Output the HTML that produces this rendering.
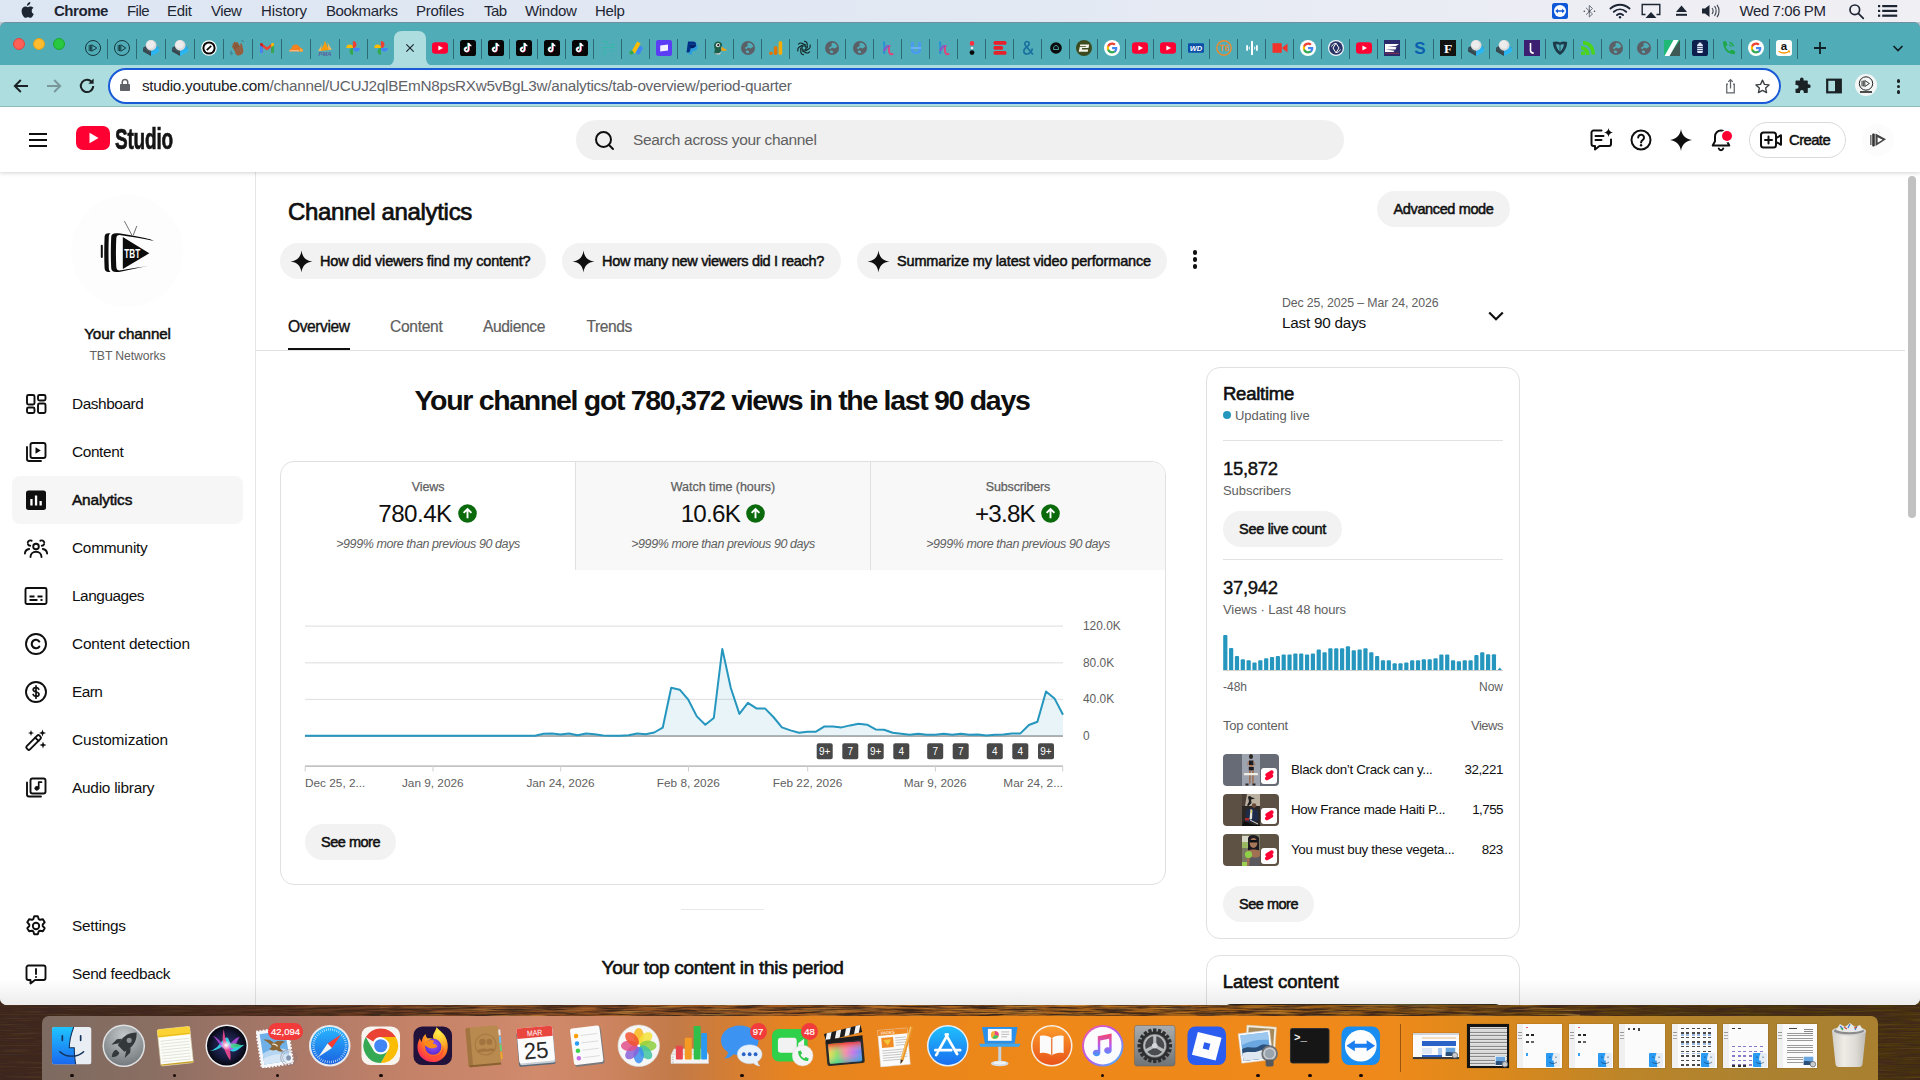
<!DOCTYPE html>
<html lang="en">
<head>
<meta charset="utf-8">
<title>Channel analytics - YouTube Studio</title>
<style>
*{box-sizing:border-box;margin:0;padding:0}
html,body{width:1920px;height:1080px;overflow:hidden;background:#3a2418;font-family:"Liberation Sans",sans-serif;color:#0f0f0f}
.abs{position:absolute}
#screen{position:absolute;left:0;top:0;width:1920px;height:1080px;overflow:hidden}
/* desktop wallpaper */
#wall{position:absolute;left:0;top:1000px;width:1920px;height:80px}
/* mac menubar */
#menubar{position:absolute;left:0;top:0;width:1920px;height:22px;background:linear-gradient(90deg,#dde6f3 0%,#e3e9f3 55%,#eeeef4 85%,#f0eff3 100%);font-size:15px;line-height:22px;color:#1d2533;white-space:nowrap}
#menubar span{position:absolute;top:0}
/* chrome */
#tabbar{position:absolute;left:0;top:22px;width:1920px;height:43px;background:#50adb8;border-top:1px solid #6f8fa0;border-top-left-radius:6px;border-top-right-radius:6px}
#toolbar{position:absolute;left:0;top:65px;width:1920px;height:42px;background:#aedddf;border-bottom:1px solid #8fb9bd}
#url{position:absolute;left:108px;top:3px;width:1673px;height:35.5px;border:2px solid #1a5ad7;border-radius:18px;background:#fff}
#url .t{position:absolute;left:32px;top:0;line-height:31px;font-size:15.3px;color:#5f6368;white-space:nowrap;letter-spacing:-0.05px}
#url .t b{font-weight:400;color:#202124}
/* page */
#page{position:absolute;left:0;top:107px;width:1920px;height:898px;background:#fff;overflow:hidden;border-bottom-left-radius:7px;border-bottom-right-radius:7px}
#ythead{position:absolute;left:0;top:0;width:1920px;height:65px;background:#fff;box-shadow:0 1px 4px rgba(0,0,0,.18);z-index:5}
#side{position:absolute;left:0;top:65px;width:256px;height:833px;border-right:1px solid #e5e5e5;background:#fff}
#main{position:absolute;left:256px;top:65px;width:1649px;height:833px;background:#fff;overflow:hidden}
#sbar{position:absolute;left:1905px;top:65px;width:15px;height:833px;background:#fff}
#sbar i{position:absolute;left:3px;top:4px;width:8px;height:342px;border-radius:4px;background:#c1c1c1}
.nav{position:absolute;left:12px;width:231px;height:46px;border-radius:8px}
.nav.sel{background:#f6f6f6}
.nav svg{position:absolute;left:12px;top:12px;width:24px;height:24px}
.nav span{position:absolute;left:60px;top:0;line-height:46px;font-size:15.4px;color:#0f0f0f;white-space:nowrap}
.nav.sel span{-webkit-text-stroke:.5px #0f0f0f}
.pill{position:absolute;background:#f2f2f2;border-radius:18px;height:36px;line-height:36px;font-size:14.5px;font-weight:400;-webkit-text-stroke:.5px #0f0f0f;color:#0f0f0f;text-align:center;white-space:nowrap}
.chip{position:absolute;top:71px;height:36px;border-radius:18px;background:#f2f2f2;font-size:14.5px;font-weight:400;-webkit-text-stroke:.5px #0f0f0f;line-height:36px;color:#0f0f0f;white-space:nowrap;padding-left:40px}
.chip svg{position:absolute;left:10px;top:6.5px;width:23px;height:23px}
.tab{position:absolute;top:134px;font-size:15.6px;line-height:48px;color:#606060;white-space:nowrap}
.card{position:absolute;border:1px solid #e0e0e0;border-radius:14px;background:#fff}
.gry{color:#606060}
/* dock */
#dock{position:absolute;left:42px;top:1016px;width:1836px;height:70px;border-radius:7px 7px 0 0;background:linear-gradient(90deg,#7d6a60 0%,#8a6e62 6%,#a87868 13%,#c48268 20%,#d08a6c 27%,#cc8460 31%,#c27a48 34.500%,#d47e34 37.500%,#e8841f 41%,#ee8818 55%,#ef8a1a 73%,#dc891c 79%,#bd8528 86%,#ac8230 93%,#a88030 100%)}
/*FIT_START*/
#t_ca{letter-spacing:-0.321px !important}
#t_am{letter-spacing:-0.369px !important}
#t_c1{letter-spacing:-0.172px !important}
#t_c2{letter-spacing:-0.306px !important}
#t_c3{letter-spacing:-0.149px !important}
#t_tb1{letter-spacing:-0.438px !important}
#t_tb2{letter-spacing:-0.304px !important}
#t_tb3{letter-spacing:-0.379px !important}
#t_tb4{letter-spacing:-0.411px !important}
#t_d1{letter-spacing:-0.104px !important}
#t_d2{letter-spacing:-0.229px !important}
#t_hl{letter-spacing:-1.312px !important}
#t_s1a{letter-spacing:-0.105px !important}
#t_s2a{letter-spacing:-0.046px !important}
#t_s3a{letter-spacing:-0.155px !important}
#t_s1b{letter-spacing:-0.546px !important}
#t_s2b{letter-spacing:-0.784px !important}
#t_s3b{letter-spacing:-0.778px !important}
#t_s1c{letter-spacing:-0.419px !important}
#t_s2c{letter-spacing:-0.419px !important}
#t_s3c{letter-spacing:-0.419px !important}
#t_sm1{letter-spacing:-0.484px !important}
#t_sm2{letter-spacing:-0.484px !important}
#t_tc{letter-spacing:-0.281px !important}
#t_rt{letter-spacing:-0.250px !important}
#t_ul{letter-spacing:-0.043px !important}
#t_n1{letter-spacing:-0.299px !important}
#t_n2{letter-spacing:-0.299px !important}
#t_sb{letter-spacing:-0.058px !important}
#t_slc{letter-spacing:-0.307px !important}
#t_v48{letter-spacing:-0.085px !important}
#t_tc2{letter-spacing:-0.211px !important}
#t_r0{letter-spacing:-0.331px !important}
#t_r1{letter-spacing:-0.296px !important}
#t_r2{letter-spacing:-0.311px !important}
#t_lc{letter-spacing:-0.024px !important}
#t_yc{letter-spacing:-0.134px !important}
#t_tbt{letter-spacing:-0.082px !important}
#t_srch{letter-spacing:-0.332px !important}
#t_cr{letter-spacing:-0.550px !important}
#t_nv1{letter-spacing:-0.444px !important}
#t_nv2{letter-spacing:-0.372px !important}
#t_nv3{letter-spacing:-0.155px !important}
#t_nv4{letter-spacing:-0.259px !important}
#t_nv5{letter-spacing:-0.464px !important}
#t_nv6{letter-spacing:-0.162px !important}
#t_nv7{letter-spacing:-0.550px !important}
#t_nv8{letter-spacing:-0.117px !important}
#t_nv9{letter-spacing:-0.250px !important}
#t_nv10{letter-spacing:-0.228px !important}
#t_nv11{letter-spacing:-0.345px !important}
#t_url{letter-spacing:-0.288px !important}
#t_clk{letter-spacing:-0.419px !important}
#t_v0{letter-spacing:-0.411px !important}
#t_v1{letter-spacing:-0.543px !important}
#t_v2{letter-spacing:-0.348px !important}
#t_vw{letter-spacing:-0.491px !important}
#t_mb1{letter-spacing:-0.465px !important}
#t_mb2{letter-spacing:-0.550px !important}
#t_mb3{letter-spacing:-0.340px !important}
#t_mb4{letter-spacing:-0.438px !important}
#t_mb5{letter-spacing:-0.096px !important}
#t_mb6{letter-spacing:-0.392px !important}
#t_mb7{letter-spacing:-0.254px !important}
#t_mb8{letter-spacing:-0.550px !important}
#t_mb9{letter-spacing:-0.310px !important}
#t_mb10{letter-spacing:-0.340px !important}
/*FIT_END*/
</style>
</head>
<body>
<div id="screen">
<svg id="wall" width="1920" height="80" viewBox="0 0 1920 80" preserveAspectRatio="none">
<defs>
<linearGradient id="wg" x1="0" y1="0" x2="1" y2="0"><stop offset="0" stop-color="#3a2620"/><stop offset=".08" stop-color="#422820"/><stop offset=".18" stop-color="#663822"/><stop offset=".28" stop-color="#884a22"/><stop offset=".4" stop-color="#a05a20"/><stop offset=".55" stop-color="#a8621a"/><stop offset=".68" stop-color="#9a5c14"/><stop offset=".78" stop-color="#6e460f"/><stop offset=".88" stop-color="#4c360c"/><stop offset="1" stop-color="#48340c"/></linearGradient>
<filter id="wn" x="0" y="0" width="100%" height="100%"><feTurbulence type="fractalNoise" baseFrequency="0.03 0.55" numOctaves="4" seed="7"/><feColorMatrix type="matrix" values="0 0 0 0 0.05  0 0 0 0 0.02  0 0 0 0 0.01  3 0 0 0 -1.050"/></filter>
<filter id="wn2" x="0" y="0" width="100%" height="100%"><feTurbulence type="fractalNoise" baseFrequency="0.02 0.7" numOctaves="3" seed="21"/><feColorMatrix type="matrix" values="0 0 0 0 0.95  0 0 0 0 0.55  0 0 0 0 0.1  0 2.500 0 0 -1.250"/></filter>
</defs>
<rect width="1920" height="80" fill="url(#wg)"/>
<rect width="1920" height="80" filter="url(#wn)"/>
<rect x="380" width="1200" height="80" filter="url(#wn2)" opacity=".4"/><rect width="1920" height="80" filter="url(#wn2)" opacity=".12"/>
</svg>

<!-- MENUBAR -->
<div id="menubar">
<svg class="abs" style="left:20px;top:2px" width="15" height="18" viewBox="0 0 15 18"><path fill="#1d2533" d="M10.3 0c.1 1-.3 1.900-.9 2.600-.6.700-1.500 1.200-2.400 1.100-.1-.9.300-1.900.9-2.500C8.500.500 9.500.100 10.300 0zM13.300 6.100c-.1.100-1.600.900-1.600 2.800 0 2.200 1.900 2.900 2 3-.0.100-.3 1.100-1 2.100-.6.900-1.300 1.800-2.300 1.800s-1.300-.6-2.400-.6c-1.200 0-1.500.6-2.500.6s-1.600-.8-2.300-1.800C2.300 12.800 1.600 10.800 1.600 9c0-3 1.900-4.500 3.800-4.500 1 0 1.800.700 2.500.700.600 0 1.600-.7 2.700-.7.400 0 2 .0 3 1.500z"/></svg>
<span id="t_mb1" style="left:54px;font-weight:700">Chrome</span>
<span id="t_mb2" style="left:127px">File</span>
<span id="t_mb3" style="left:167px">Edit</span>
<span id="t_mb4" style="left:211px">View</span>
<span id="t_mb5" style="left:261px">History</span>
<span id="t_mb6" style="left:326px">Bookmarks</span>
<span id="t_mb7" style="left:416px">Profiles</span>
<span id="t_mb8" style="left:484px">Tab</span>
<span id="t_mb9" style="left:525px">Window</span>
<span id="t_mb10" style="left:595px">Help</span>
<span style="left:1739.500px" id="t_clk">Wed 7:06 PM</span>

<svg class="abs" style="left:1552px;top:3px" width="16" height="16" viewBox="0 0 16 16"><rect width="16" height="16" rx="2.500" fill="#0e57d8"/><circle cx="8" cy="8" r="6" fill="#fff"/><path d="M3.200 8l2.800-2.300v1.500h4V5.700L12.800 8 10 10.300V8.800H6v1.500z" fill="#0e57d8"/></svg>
<svg class="abs" style="left:1582px;top:3px" width="15" height="17" viewBox="0 0 15 17" fill="none" stroke="#6a6f7a" stroke-width="1"><path d="M4 4.800l6.500 6.200-3.200 3V2.500l3.200 3L4 11.700"/><circle cx="2.300" cy="8.300" r=".8" fill="#444" stroke="none"/><circle cx="12.500" cy="8.300" r=".8" fill="#444" stroke="none"/><circle cx="7.300" cy="8.300" r=".9" fill="#444" stroke="none"/></svg>
<svg class="abs" style="left:1609px;top:3px" width="22" height="16" viewBox="0 0 22 16" fill="none" stroke="#1d2533" stroke-width="1.900" stroke-linecap="round"><path d="M1.500 5.500c5.500-5 13.500-5 19 0"/><path d="M4.800 8.800c3.700-3.300 8.700-3.300 12.400 0"/><path d="M8 12c1.800-1.600 4.200-1.600 6 0"/><circle cx="11" cy="14.300" r="1.200" fill="#1d2533" stroke="none"/></svg>
<svg class="abs" style="left:1641px;top:3px" width="20" height="16" viewBox="0 0 20 16"><path d="M4.500 11.500H1.200V1.500h17.600v10H15.500" fill="none" stroke="#1d2533" stroke-width="1.400"/><path d="M10 9l5.500 6h-11z" fill="#1d2533"/></svg>
<svg class="abs" style="left:1675px;top:5px" width="13" height="12" viewBox="0 0 13 12"><path d="M6.500 0.500L12 7H1z" fill="#1d2533"/><rect x="1" y="8.800" width="11" height="2" fill="#1d2533"/></svg>
<svg class="abs" style="left:1701px;top:3px" width="19" height="16" viewBox="0 0 19 16"><path d="M1 5.500h3L8.500 2v12L4 10.500H1z" fill="#1d2533"/><path d="M11 5c1.300 1.700 1.300 4.300 0 6M13.500 3.200c2.200 2.700 2.200 6.900 0 9.600M16 1.800c2.700 3.500 2.700 8.900 0 12.400" fill="none" stroke="#1d2533" stroke-width="1.100" opacity=".85"/></svg>
<svg class="abs" style="left:1848px;top:3px" width="17" height="17" viewBox="0 0 17 17" fill="none" stroke="#1d2533" stroke-width="1.700"><circle cx="6.800" cy="6.800" r="4.800"/><path d="M10.300 10.300l5 5" stroke-linecap="round"/></svg>
<svg class="abs" style="left:1878px;top:5px" width="20" height="12" viewBox="0 0 20 12" fill="#1d2533"><rect x="0" y="0" width="2.200" height="2.200"/><rect x="4.200" y="0" width="15" height="2.200"/><rect x="0" y="4.800" width="2.200" height="2.200"/><rect x="4.200" y="4.800" width="15" height="2.200"/><rect x="0" y="9.600" width="2.200" height="2.200"/><rect x="4.200" y="9.600" width="15" height="2.200"/></svg>

</div>

<i class="abs" style="left:0;top:22px;width:1920px;height:10px;background:#b9c6d2"></i>
<!-- CHROME TAB BAR -->
<div id="tabbar">
<i class="abs" style="left:13px;top:15px;width:12px;height:12px;border-radius:6px;background:#fe5f57;border:.5px solid #e0443e"></i>
<i class="abs" style="left:33px;top:15px;width:12px;height:12px;border-radius:6px;background:#febc2e;border:.5px solid #dea123"></i>
<i class="abs" style="left:53px;top:15px;width:12px;height:12px;border-radius:6px;background:#28c840;border:.5px solid #1aab29"></i>
<!--TABS_START-->
<svg class="abs" style="left:85.10px;top:17.00px" width="16" height="16" viewBox="0 0 16 16"><circle cx="8" cy="8" r="7.500" fill="none" stroke="#15353c" stroke-width="1"/><path d="M6.800 4.800l5 3.200-5 3.200z" fill="none" stroke="#15353c" stroke-width="1"/><path d="M4.200 5v6M5.500 4.700v6.600" stroke="#15353c" stroke-width=".9"/></svg>
<svg class="abs" style="left:114.10px;top:17.00px" width="16" height="16" viewBox="0 0 16 16"><circle cx="8" cy="8" r="7.500" fill="none" stroke="#15353c" stroke-width="1"/><path d="M6.800 4.800l5 3.200-5 3.200z" fill="none" stroke="#15353c" stroke-width="1"/><path d="M4.200 5v6M5.500 4.700v6.600" stroke="#15353c" stroke-width=".9"/></svg>
<svg class="abs" style="left:143.10px;top:17.00px" width="16" height="16" viewBox="0 0 16 16"><path d="M0 7.800L8.100 3.100 16.100 7.800 8.100 12.500z" fill="#37474f"/><path d="M8.100 3.100L16.100 7.800 8.100 12.500z" fill="#29b6f6"/><path d="M0 7.800l8.100 4.700v3.600L0 11.500z" fill="#37474f"/><path d="M8.100 12.500l8-4.700v3.700l-8 4.600z" fill="#29b6f6"/><circle cx="8.100" cy="5.300" r="5.400" fill="#d9d9d9"/><circle cx="7.600" cy="4.600" r="4.200" fill="#ececec"/></svg>
<svg class="abs" style="left:172.10px;top:17.00px" width="16" height="16" viewBox="0 0 16 16"><path d="M0 7.800L8.100 3.100 16.100 7.800 8.100 12.500z" fill="#37474f"/><path d="M8.100 3.100L16.100 7.800 8.100 12.500z" fill="#29b6f6"/><path d="M0 7.800l8.100 4.700v3.600L0 11.500z" fill="#37474f"/><path d="M8.100 12.500l8-4.700v3.700l-8 4.600z" fill="#29b6f6"/><circle cx="8.100" cy="5.300" r="5.400" fill="#d9d9d9"/><circle cx="7.600" cy="4.600" r="4.200" fill="#ececec"/></svg>
<svg class="abs" style="left:201.10px;top:17.00px" width="16" height="16" viewBox="0 0 16 16"><circle cx="8" cy="8" r="7.800" fill="#fff"/><circle cx="8" cy="8" r="6.600" fill="#0a0a0a"/><circle cx="8" cy="8" r="4.600" fill="#fff"/><path d="M5.800 10.200l4.400-4.400" stroke="#0a0a0a" stroke-width="1.700"/></svg>
<svg class="abs" style="left:230.10px;top:17.00px" width="16" height="16" viewBox="0 0 16 16"><g transform="rotate(-32 8 9) translate(-1.200 -.8) scale(1.150)"><path d="M4.600 8.500V4.200c0-1 1.500-1 1.500 0V2.800c0-1.100 1.600-1.100 1.600 0V2.500c0-1.100 1.600-1.100 1.600 0v.9c0-1 1.500-1 1.500 0v4.300l1-1.600c.5-.9 1.800-.3 1.400.7l-1.600 4.500c-.6 1.800-1.900 3-3.900 3-2.300 0-3.700-1.400-3.700-3.500z" fill="#94603f"/><path d="M6.100 4.200v3.300M7.700 3v4.300M9.300 3.400v4" stroke="#6e452c" stroke-width=".45"/></g><path d="M.800 10.800c.3 1.300 1 2.300 2 3M0 12.200c.4 1.300 1.100 2.300 2.100 3" stroke="#3e6a73" stroke-width=".8" fill="none"/><path d="M11.500 .600c1 .1 1.900.6 2.500 1.400" stroke="#3e6a73" stroke-width=".8" fill="none"/></svg>
<svg class="abs" style="left:259.10px;top:17.00px" width="16" height="16" viewBox="0 0 16 16"><path d="M1 4v9h2.800V7.300L8 10.400l4.200-3.100V13H15V4l-1.600-.8L8 7.200 2.600 3.200z" fill="#ea4335"/><path d="M1 4.500V13h2.800V6.500z" fill="#4285f4"/><path d="M15 4.500V13h-2.800V6.500z" fill="#34a853"/><path d="M12.200 3.800V7.300L15 5.200V4.300c0-1.200-1.400-1.800-2.300-1.100z" fill="#fbbc04"/><path d="M3.800 3.800V7.300L1 5.200V4.300c0-1.200 1.400-1.800 2.300-1.100z" fill="#c5221f"/></svg>
<svg class="abs" style="left:288.10px;top:17.00px" width="16" height="16" viewBox="0 0 16 16"><path d="M11.200 11.500H1.300c-.2-2 .9-3 2.300-3 .2-2.400 2-3.900 4.200-3.900 2 0 3.300 1.100 3.900 2.900 1.700-.1 2.900.9 3.200 2.300.1.600.1 1.200-.1 1.700z" fill="#f6821f"/><path d="M12.200 8.500c1.500 0 2.600 1.200 2.600 3h-3.300z" fill="#fbad41"/><path d="M1.500 10.800h9.500" stroke="#fff" stroke-width=".6"/></svg>
<svg class="abs" style="left:317.10px;top:17.00px" width="16" height="16" viewBox="0 0 16 16"><path d="M8 .500c1 3 2.500 6.500 4.500 9.500L3 11C5.500 8 7.300 4 8 .5z" fill="#f89c0e"/><path d="M10.500 2c1 2.500 2.700 5.200 4.500 7.500l-3.500.4z" fill="#f5b95a"/><path d="M5 3c-.5 2.500-2 5.500-4 8l3-.3z" fill="#f5b95a"/><text x="8" y="15.600" font-size="5.800" font-weight="700" font-style="italic" fill="#5a5f9c" text-anchor="middle" font-family="Liberation Sans, sans-serif">PMA</text></svg>
<svg class="abs" style="left:345.30px;top:17.00px" width="16" height="16" viewBox="0 0 16 16"><path d="M8 8V1.200a3.400 3.400 0 010 6.800z" fill="#ea4335" transform="translate(-.2 0)"/><path d="M7.800 8V1.200A3.500 3.500 0 004.300 4.700h0A3.400 3.400 0 007.800 8z" fill="#ea4335" opacity="0"/><path d="M8 8H1.200a3.400 3.400 0 016.800 0z" fill="#fbbc04"/><path d="M8 8v6.800a3.400 3.400 0 010-6.800z" fill="#34a853"/><path d="M8 8h6.800a3.400 3.400 0 01-6.800 0z" fill="#4285f4"/><path d="M8 8V1.200a3.400 3.400 0 010 6.800z" fill="#ea4335"/></svg>
<svg class="abs" style="left:373.30px;top:17.00px" width="16" height="16" viewBox="0 0 16 16"><path d="M8 8V1.200a3.400 3.400 0 010 6.800z" fill="#ea4335" transform="translate(-.2 0)"/><path d="M7.800 8V1.200A3.500 3.500 0 004.300 4.700h0A3.400 3.400 0 007.800 8z" fill="#ea4335" opacity="0"/><path d="M8 8H1.200a3.400 3.400 0 016.800 0z" fill="#fbbc04"/><path d="M8 8v6.800a3.400 3.400 0 010-6.800z" fill="#34a853"/><path d="M8 8h6.800a3.400 3.400 0 01-6.800 0z" fill="#4285f4"/><path d="M8 8V1.200a3.400 3.400 0 010 6.800z" fill="#ea4335"/></svg>
<i class="abs" style="left:107.10px;top:15.5px;width:1.200px;height:20px;background:#2c6a74"></i>
<i class="abs" style="left:136.10px;top:15.5px;width:1.200px;height:20px;background:#2c6a74"></i>
<i class="abs" style="left:165.10px;top:15.5px;width:1.200px;height:20px;background:#2c6a74"></i>
<i class="abs" style="left:194.10px;top:15.5px;width:1.200px;height:20px;background:#2c6a74"></i>
<i class="abs" style="left:223.10px;top:15.5px;width:1.200px;height:20px;background:#2c6a74"></i>
<i class="abs" style="left:252.10px;top:15.5px;width:1.200px;height:20px;background:#2c6a74"></i>
<i class="abs" style="left:281.10px;top:15.5px;width:1.200px;height:20px;background:#2c6a74"></i>
<i class="abs" style="left:310.10px;top:15.5px;width:1.200px;height:20px;background:#2c6a74"></i>
<i class="abs" style="left:338.70px;top:15.5px;width:1.200px;height:20px;background:#2c6a74"></i>
<i class="abs" style="left:366.70px;top:15.5px;width:1.200px;height:20px;background:#2c6a74"></i>
<svg class="abs" style="left:386px;top:7px" width="48" height="36" viewBox="0 0 48 36"><path d="M0 36c4.500 0 8-3 8-8V9c0-5 3-8 8-8h16c5 0 8 3 8 8v19c0 5 3.500 8 8 8z" fill="#aedddf"/></svg>
<svg class="abs" style="left:403.00px;top:18.00px" width="14" height="14" viewBox="0 0 16 16"><path d="M3.800 3.800l8.400 8.400M12.200 3.800l-8.400 8.400" stroke="#1f2a30" stroke-width="1.400"/></svg>
<svg class="abs" style="left:431.75px;top:17.00px" width="16" height="16" viewBox="0 0 16 16"><rect x="0" y="2.300" width="16" height="11.400" rx="3.200" fill="#ff0033"/><path d="M6.400 5.400v5.200L11 8z" fill="#fff"/></svg>
<i class="abs" style="left:453.25px;top:15.5px;width:1.200px;height:20px;background:#2c6a74"></i>
<svg class="abs" style="left:459.75px;top:17.00px" width="16" height="16" viewBox="0 0 16 16"><rect x="0" y="0" width="16" height="16" rx="2.600" fill="#060606"/><path d="M8.600 3v6.600a1.900 1.900 0 11-1.600-1.900" fill="none" stroke="#25f4ee" stroke-width="1.600" transform="translate(-.4 -.3)"/><path d="M8.600 3v6.600a1.900 1.900 0 11-1.600-1.900" fill="none" stroke="#fe2c55" stroke-width="1.600" transform="translate(.4 .3)"/><path d="M8.600 3v6.600a1.900 1.900 0 11-1.600-1.900M8.600 3.200c.3 1.500 1.300 2.400 2.800 2.500" fill="none" stroke="#fff" stroke-width="1.600"/></svg>
<i class="abs" style="left:481.25px;top:15.5px;width:1.200px;height:20px;background:#2c6a74"></i>
<svg class="abs" style="left:487.75px;top:17.00px" width="16" height="16" viewBox="0 0 16 16"><rect x="0" y="0" width="16" height="16" rx="2.600" fill="#060606"/><path d="M8.600 3v6.600a1.900 1.900 0 11-1.600-1.900" fill="none" stroke="#25f4ee" stroke-width="1.600" transform="translate(-.4 -.3)"/><path d="M8.600 3v6.600a1.900 1.900 0 11-1.600-1.900" fill="none" stroke="#fe2c55" stroke-width="1.600" transform="translate(.4 .3)"/><path d="M8.600 3v6.600a1.900 1.900 0 11-1.600-1.900M8.600 3.200c.3 1.500 1.300 2.400 2.800 2.500" fill="none" stroke="#fff" stroke-width="1.600"/></svg>
<i class="abs" style="left:509.25px;top:15.5px;width:1.200px;height:20px;background:#2c6a74"></i>
<svg class="abs" style="left:515.75px;top:17.00px" width="16" height="16" viewBox="0 0 16 16"><rect x="0" y="0" width="16" height="16" rx="2.600" fill="#060606"/><path d="M8.600 3v6.600a1.900 1.900 0 11-1.600-1.900" fill="none" stroke="#25f4ee" stroke-width="1.600" transform="translate(-.4 -.3)"/><path d="M8.600 3v6.600a1.900 1.900 0 11-1.600-1.900" fill="none" stroke="#fe2c55" stroke-width="1.600" transform="translate(.4 .3)"/><path d="M8.600 3v6.600a1.900 1.900 0 11-1.600-1.900M8.600 3.200c.3 1.500 1.300 2.400 2.800 2.500" fill="none" stroke="#fff" stroke-width="1.600"/></svg>
<i class="abs" style="left:537.25px;top:15.5px;width:1.200px;height:20px;background:#2c6a74"></i>
<svg class="abs" style="left:543.75px;top:17.00px" width="16" height="16" viewBox="0 0 16 16"><rect x="0" y="0" width="16" height="16" rx="2.600" fill="#060606"/><path d="M8.600 3v6.600a1.900 1.900 0 11-1.600-1.900" fill="none" stroke="#25f4ee" stroke-width="1.600" transform="translate(-.4 -.3)"/><path d="M8.600 3v6.600a1.900 1.900 0 11-1.600-1.900" fill="none" stroke="#fe2c55" stroke-width="1.600" transform="translate(.4 .3)"/><path d="M8.600 3v6.600a1.900 1.900 0 11-1.600-1.900M8.600 3.200c.3 1.500 1.300 2.400 2.800 2.500" fill="none" stroke="#fff" stroke-width="1.600"/></svg>
<i class="abs" style="left:565.25px;top:15.5px;width:1.200px;height:20px;background:#2c6a74"></i>
<svg class="abs" style="left:571.75px;top:17.00px" width="16" height="16" viewBox="0 0 16 16"><rect x="0" y="0" width="16" height="16" rx="2.600" fill="#060606"/><path d="M8.600 3v6.600a1.900 1.900 0 11-1.600-1.900" fill="none" stroke="#25f4ee" stroke-width="1.600" transform="translate(-.4 -.3)"/><path d="M8.600 3v6.600a1.900 1.900 0 11-1.600-1.900" fill="none" stroke="#fe2c55" stroke-width="1.600" transform="translate(.4 .3)"/><path d="M8.600 3v6.600a1.900 1.900 0 11-1.600-1.900M8.600 3.200c.3 1.500 1.300 2.400 2.800 2.500" fill="none" stroke="#fff" stroke-width="1.600"/></svg>
<i class="abs" style="left:593.25px;top:15.5px;width:1.200px;height:20px;background:#2c6a74"></i>
<svg class="abs" style="left:599.75px;top:17.00px" width="16" height="16" viewBox="0 0 16 16"><path d="M2.500 1.500h3a1.500 1.500 0 010 3M10 4.500h3.500v3h-11M2.500 10.500h3v4M9.500 11h4M2 14.500h2" fill="none" stroke="#35b8a8" stroke-width="1.100"/></svg>
<i class="abs" style="left:621.25px;top:15.5px;width:1.200px;height:20px;background:#2c6a74"></i>
<svg class="abs" style="left:627.75px;top:17.00px" width="16" height="16" viewBox="0 0 16 16"><path d="M9.200 1.500l3.400 2-5.700 10-3.400-2z" fill="#fbbc04"/><rect x="9.500" y="5.800" width="4" height="9" rx="2" transform="rotate(30 11.500 10.300)" fill="#4285f4"/><circle cx="3.400" cy="12.600" r="2.100" fill="#34a853"/></svg>
<i class="abs" style="left:649.25px;top:15.5px;width:1.200px;height:20px;background:#2c6a74"></i>
<svg class="abs" style="left:655.75px;top:17.00px" width="16" height="16" viewBox="0 0 16 16"><rect x="0" y="0" width="16" height="16" rx="2.200" fill="#5b3df5"/><path d="M4.200 5.500l7.800-1v6l-7.800 1z" fill="#f2efff"/></svg>
<i class="abs" style="left:677.25px;top:15.5px;width:1.200px;height:20px;background:#2c6a74"></i>
<svg class="abs" style="left:683.75px;top:17.00px" width="16" height="16" viewBox="0 0 16 16"><path d="M4 1.500h5c2.300 0 3.500 1.400 3.100 3.400-.4 2.300-2 3.400-4.200 3.400H6.500L5.800 12.500H2.500z" fill="#003087"/><path d="M6.200 4.500h4.600c2 0 3.100 1.300 2.700 3.200-.4 2.200-2 3.300-4 3.300H8.300l-.6 3.500H4.800z" fill="#2a9cde"/><path d="M6.200 4.500h4.600c.6 0 1.100.1 1.500.3-.5 2.200-2 3.500-4.400 3.500H6.500l-.5 3.200H5z" fill="#012169"/></svg>
<i class="abs" style="left:705.25px;top:15.5px;width:1.200px;height:20px;background:#2c6a74"></i>
<svg class="abs" style="left:711.75px;top:17.00px" width="16" height="16" viewBox="0 0 16 16"><path d="M2 5.500C2 3 4 1.300 6.500 1.500c2.200.2 3.500 1.800 3.800 3.600l-1.600 3 .6 2.500-1.800 2.400-3.500 1.500L2 12.800c1.200-2 .9-3.600.4-5z" fill="#1d5e4a"/><path d="M9.500 6.800l5.700 3.200c-1.500 1.300-4 1.400-6 .4z" fill="#e8a21c"/><circle cx="6" cy="5.200" r="2.100" fill="#e8e8e8"/><circle cx="6.300" cy="5.200" r="1.100" fill="#222"/><path d="M2.500 12.500c2 1.200 4.500 1.200 6.500-.5l-1 2.500H4z" fill="#c9c9c9"/></svg>
<i class="abs" style="left:733.25px;top:15.5px;width:1.200px;height:20px;background:#2c6a74"></i>
<svg class="abs" style="left:739.75px;top:17.00px" width="16" height="16" viewBox="0 0 16 16"><circle cx="8" cy="8" r="7" fill="#5b5f66"/><path d="M8.500 2.800C11 2.800 13 4.500 13.300 7c-1.300.2-1.800 1.200-2.800 1.400-1.200.2-1.500-.9-2.500-.6-1 .3-.8 1.400-1.800 1.400-.8 0-1.200-.8-.9-1.600.4-1 1.700-.8 2.200-1.600.5-.8-.2-1.500.1-2.300.2-.5.500-.8.900-.9z" fill="#50adb8"/><path d="M6.500 10.500c1-.3 2.300.1 2.700 1 .3.800-.4 1.500-1.200 1.700-1 .1-2-.5-2.200-1.400-.1-.6.200-1.100.7-1.300z" fill="#50adb8"/></svg>
<i class="abs" style="left:761.25px;top:15.5px;width:1.200px;height:20px;background:#2c6a74"></i>
<svg class="abs" style="left:767.75px;top:17.00px" width="16" height="16" viewBox="0 0 16 16"><rect x="10.600" y="1" width="3.600" height="14" rx="1.800" fill="#f9ab00"/><rect x="5.800" y="6" width="3.600" height="9" rx="1.800" fill="#e37400"/><circle cx="3" cy="13.200" r="1.800" fill="#e37400"/></svg>
<i class="abs" style="left:789.25px;top:15.5px;width:1.200px;height:20px;background:#2c6a74"></i>
<svg class="abs" style="left:795.75px;top:17.00px" width="16" height="16" viewBox="0 0 16 16"><g fill="none" stroke="#10221f" stroke-width="1.100"><circle cx="8" cy="8" r="2.200"/><path d="M8 1.300a3.200 3.200 0 013.200 3.200v3.800M13.800 4.600a3.200 3.200 0 01-1.200 4.400l-3.300 1.900M13.800 11.400a3.200 3.200 0 01-4.400 1.200L6.100 10.700M8 14.700a3.200 3.200 0 01-3.200-3.200V7.700M2.200 11.400a3.200 3.200 0 011.200-4.400l3.300-1.900M2.200 4.600a3.200 3.200 0 014.400-1.200l3.300 1.900"/></g></svg>
<i class="abs" style="left:817.25px;top:15.5px;width:1.200px;height:20px;background:#2c6a74"></i>
<svg class="abs" style="left:823.75px;top:17.00px" width="16" height="16" viewBox="0 0 16 16"><circle cx="8" cy="8" r="7" fill="#5b5f66"/><path d="M8.500 2.800C11 2.800 13 4.500 13.300 7c-1.300.2-1.800 1.200-2.800 1.400-1.200.2-1.500-.9-2.500-.6-1 .3-.8 1.400-1.800 1.400-.8 0-1.200-.8-.9-1.600.4-1 1.700-.8 2.200-1.600.5-.8-.2-1.500.1-2.300.2-.5.500-.8.900-.9z" fill="#50adb8"/><path d="M6.500 10.500c1-.3 2.300.1 2.700 1 .3.800-.4 1.500-1.200 1.700-1 .1-2-.5-2.200-1.400-.1-.6.200-1.100.7-1.300z" fill="#50adb8"/></svg>
<i class="abs" style="left:845.25px;top:15.5px;width:1.200px;height:20px;background:#2c6a74"></i>
<svg class="abs" style="left:851.75px;top:17.00px" width="16" height="16" viewBox="0 0 16 16"><circle cx="8" cy="8" r="7" fill="#5b5f66"/><path d="M8.500 2.800C11 2.800 13 4.500 13.300 7c-1.300.2-1.800 1.200-2.800 1.400-1.200.2-1.500-.9-2.500-.6-1 .3-.8 1.400-1.800 1.400-.8 0-1.200-.8-.9-1.600.4-1 1.700-.8 2.200-1.600.5-.8-.2-1.500.1-2.300.2-.5.500-.8.900-.9z" fill="#50adb8"/><path d="M6.500 10.500c1-.3 2.300.1 2.700 1 .3.800-.4 1.500-1.200 1.700-1 .1-2-.5-2.200-1.400-.1-.6.200-1.100.7-1.300z" fill="#50adb8"/></svg>
<i class="abs" style="left:873.25px;top:15.5px;width:1.200px;height:20px;background:#2c6a74"></i>
<svg class="abs" style="left:879.75px;top:17.00px" width="16" height="16" viewBox="0 0 16 16"><path d="M4 1.500c.5 4 .5 8 .2 12.500" stroke="#2a8fd8" stroke-width="2" fill="none"/><path d="M4.300 11c1-3 3-5 5-5-.5 3-1 5 .5 7.500 1 1 2.500.8 3.500.2" stroke="#e0457b" stroke-width="2" fill="none"/><path d="M4.300 11c1-3 3-5 5-5" stroke="#7a5fd0" stroke-width="2" fill="none"/></svg>
<i class="abs" style="left:901.25px;top:15.5px;width:1.200px;height:20px;background:#2c6a74"></i>
<svg class="abs" style="left:907.75px;top:17.00px" width="16" height="16" viewBox="0 0 16 16"><path d="M3 2v8.500c0 2 1.500 3.500 5 3.500s5-1.500 5-3.500V2h-2.800v8c0 1-.8 1.500-2.200 1.500S5.800 11 5.800 10V2z" fill="#4a9bf0"/><path d="M3 7h10v2H3z" fill="#6ab0f5"/></svg>
<i class="abs" style="left:929.25px;top:15.5px;width:1.200px;height:20px;background:#2c6a74"></i>
<svg class="abs" style="left:935.75px;top:17.00px" width="16" height="16" viewBox="0 0 16 16"><path d="M4 1.500c.5 4 .5 8 .2 12.500" stroke="#2a8fd8" stroke-width="2" fill="none"/><path d="M4.300 11c1-3 3-5 5-5-.5 3-1 5 .5 7.500 1 1 2.500.8 3.500.2" stroke="#e0457b" stroke-width="2" fill="none"/><path d="M4.300 11c1-3 3-5 5-5" stroke="#7a5fd0" stroke-width="2" fill="none"/></svg>
<i class="abs" style="left:957.25px;top:15.5px;width:1.200px;height:20px;background:#2c6a74"></i>
<svg class="abs" style="left:963.75px;top:17.00px" width="16" height="16" viewBox="0 0 16 16"><circle cx="8" cy="3.400" r="2.300" fill="#ff2d3d"/><circle cx="8" cy="8" r="1.300" fill="#e8e8e8"/><circle cx="8" cy="12.600" r="2.400" fill="#0a0a0a"/></svg>
<i class="abs" style="left:985.25px;top:15.5px;width:1.200px;height:20px;background:#2c6a74"></i>
<svg class="abs" style="left:991.75px;top:17.00px" width="16" height="16" viewBox="0 0 16 16"><rect x="1.500" y="1" width="13" height="3.800" rx="1.500" fill="#e8202a"/><rect x="1.500" y="6" width="9.500" height="3.800" rx="1.500" fill="#e8202a"/><rect x="1.500" y="11" width="13" height="3.800" rx="1.500" fill="#e8202a"/></svg>
<i class="abs" style="left:1013.25px;top:15.5px;width:1.200px;height:20px;background:#2c6a74"></i>
<svg class="abs" style="left:1019.75px;top:17.00px" width="16" height="16" viewBox="0 0 16 16"><path d="M13 14.500L5.500 5.500C4 3.500 5 1.500 7 1.500s3 2 1.500 3.800L5 8.500c-2 1.800-1.500 5.500 2 5.500 3 0 4.500-2.500 5.500-5.500" fill="none" stroke="#1b6f9e" stroke-width="1.700"/></svg>
<i class="abs" style="left:1041.25px;top:15.5px;width:1.200px;height:20px;background:#2c6a74"></i>
<svg class="abs" style="left:1047.75px;top:17.00px" width="16" height="16" viewBox="0 0 16 16"><circle cx="8" cy="8" r="5.800" fill="#0b0b0b"/><path d="M5.500 9.500c0-2 .5-4 2.500-4s2.500 2 2.500 4z" fill="none" stroke="#50adb8" stroke-width=".9"/></svg>
<i class="abs" style="left:1069.25px;top:15.5px;width:1.200px;height:20px;background:#2c6a74"></i>
<svg class="abs" style="left:1075.75px;top:17.00px" width="16" height="16" viewBox="0 0 16 16"><circle cx="8" cy="8" r="8" fill="#3d4a1e"/><path d="M3.500 5h9v3.500H6.200V10H12.500v2.200H3.500V7.200h6V6.500H3.500z" fill="#f2f2e8" transform="skewX(-12) translate(1.700 -.5)"/></svg>
<i class="abs" style="left:1097.25px;top:15.5px;width:1.200px;height:20px;background:#2c6a74"></i>
<svg class="abs" style="left:1103.75px;top:17.00px" width="16" height="16" viewBox="0 0 16 16"><circle cx="8" cy="8" r="8" fill="#fff"/><path d="M13.300 8.150c0-.4 0-.75-.1-1.100H8.100v2.100h2.900c-.1.700-.5 1.250-1.050 1.650v1.350h1.700c1-.9 1.650-2.300 1.650-4z" fill="#4285f4"/><path d="M8.100 13.400c1.450 0 2.650-.5 3.550-1.300l-1.700-1.350c-.5.300-1.100.5-1.850.5-1.400 0-2.600-.95-3-2.250H3.300v1.400c.9 1.800 2.700 3 4.800 3z" fill="#34a853"/><path d="M5.100 9c-.2-.65-.2-1.350 0-2V5.600H3.300c-.75 1.500-.75 3.300 0 4.800z" fill="#fbbc04"/><path d="M8.100 4.750c.8 0 1.500.3 2.050.8l1.500-1.500C10.750 3.200 9.550 2.600 8.100 2.600c-2.100 0-3.900 1.200-4.800 3L5.100 7c.4-1.300 1.600-2.250 3-2.250z" fill="#ea4335"/></svg>
<i class="abs" style="left:1125.25px;top:15.5px;width:1.200px;height:20px;background:#2c6a74"></i>
<svg class="abs" style="left:1131.75px;top:17.00px" width="16" height="16" viewBox="0 0 16 16"><rect x="0" y="2.300" width="16" height="11.400" rx="3.200" fill="#ff0033"/><path d="M6.400 5.400v5.200L11 8z" fill="#fff"/></svg>
<i class="abs" style="left:1153.25px;top:15.5px;width:1.200px;height:20px;background:#2c6a74"></i>
<svg class="abs" style="left:1159.75px;top:17.00px" width="16" height="16" viewBox="0 0 16 16"><rect x="0" y="2.300" width="16" height="11.400" rx="3.200" fill="#ff0033"/><path d="M6.400 5.400v5.200L11 8z" fill="#fff"/></svg>
<i class="abs" style="left:1181.25px;top:15.5px;width:1.200px;height:20px;background:#2c6a74"></i>
<svg class="abs" style="left:1187.75px;top:17.00px" width="16" height="16" viewBox="0 0 16 16"><rect x="0" y="3.300" width="16" height="9.400" rx="1" fill="#0a4fa8"/><text x="8" y="10.800" font-size="7.500" font-weight="700" font-style="italic" fill="#fff" text-anchor="middle" font-family="Liberation Sans, sans-serif" textLength="12.500" lengthAdjust="spacingAndGlyphs">WD</text></svg>
<i class="abs" style="left:1209.25px;top:15.5px;width:1.200px;height:20px;background:#2c6a74"></i>
<svg class="abs" style="left:1215.75px;top:17.00px" width="16" height="16" viewBox="0 0 16 16"><circle cx="8" cy="8" r="7.200" fill="none" stroke="#ee8a2c" stroke-width="1.400"/><text x="8" y="11.400" font-size="9.500" fill="#ee8a2c" stroke="#ee8a2c" stroke-width=".3" text-anchor="middle" font-family="Liberation Sans, sans-serif" textLength="9.500" lengthAdjust="spacingAndGlyphs">T6</text></svg>
<i class="abs" style="left:1237.25px;top:15.5px;width:1.200px;height:20px;background:#2c6a74"></i>
<svg class="abs" style="left:1243.75px;top:17.00px" width="16" height="16" viewBox="0 0 16 16"><g fill="#fff"><rect x="2.200" y="5" width="1.800" height="6" rx=".9"/><rect x="7" y=".800" width="2" height="14.400" rx="1"/><rect x="12" y="5" width="1.800" height="6" rx=".9"/><rect x="4.700" y="6.500" width="1.300" height="3" rx=".6" opacity=".7"/><rect x="10" y="6.500" width="1.300" height="3" rx=".6" opacity=".7"/></g></svg>
<i class="abs" style="left:1265.25px;top:15.5px;width:1.200px;height:20px;background:#2c6a74"></i>
<svg class="abs" style="left:1271.75px;top:17.00px" width="16" height="16" viewBox="0 0 16 16"><path d="M.500 3.200h9.300v9.600H.5z" fill="#f0342c"/><path d="M9.800 8l5.700-4.500v9z" fill="#f0342c"/></svg>
<i class="abs" style="left:1293.25px;top:15.5px;width:1.200px;height:20px;background:#2c6a74"></i>
<svg class="abs" style="left:1299.75px;top:17.00px" width="16" height="16" viewBox="0 0 16 16"><circle cx="8" cy="8" r="8" fill="#fff"/><path d="M13.300 8.150c0-.4 0-.75-.1-1.100H8.100v2.100h2.900c-.1.700-.5 1.250-1.050 1.650v1.350h1.700c1-.9 1.650-2.300 1.650-4z" fill="#4285f4"/><path d="M8.100 13.400c1.450 0 2.650-.5 3.550-1.300l-1.700-1.350c-.5.300-1.100.5-1.850.5-1.400 0-2.600-.95-3-2.250H3.300v1.400c.9 1.800 2.700 3 4.800 3z" fill="#34a853"/><path d="M5.100 9c-.2-.65-.2-1.350 0-2V5.600H3.300c-.75 1.500-.75 3.300 0 4.800z" fill="#fbbc04"/><path d="M8.100 4.750c.8 0 1.500.3 2.050.8l1.500-1.500C10.750 3.200 9.550 2.600 8.100 2.600c-2.100 0-3.900 1.200-4.800 3L5.100 7c.4-1.300 1.600-2.250 3-2.250z" fill="#ea4335"/></svg>
<i class="abs" style="left:1321.25px;top:15.5px;width:1.200px;height:20px;background:#2c6a74"></i>
<svg class="abs" style="left:1327.75px;top:17.00px" width="16" height="16" viewBox="0 0 16 16"><circle cx="8" cy="8" r="8" fill="#f2f4fa"/><circle cx="8" cy="8" r="6.800" fill="#2a3566"/><path d="M8 3.200l3 4.800-3 4.800L5 8z" fill="none" stroke="#fff" stroke-width="1"/><path d="M3.500 6.500c1-2 2.600-3 4.500-3M12.500 9.500c-1 2-2.600 3-4.500 3" stroke="#fff" stroke-width="1" fill="none"/></svg>
<i class="abs" style="left:1349.25px;top:15.5px;width:1.200px;height:20px;background:#2c6a74"></i>
<svg class="abs" style="left:1355.75px;top:17.00px" width="16" height="16" viewBox="0 0 16 16"><rect x="0" y="2.300" width="16" height="11.400" rx="3.200" fill="#ff0033"/><path d="M6.400 5.400v5.200L11 8z" fill="#fff"/></svg>
<i class="abs" style="left:1377.25px;top:15.5px;width:1.200px;height:20px;background:#2c6a74"></i>
<svg class="abs" style="left:1383.75px;top:17.00px" width="16" height="16" viewBox="0 0 16 16"><rect x="0" y="0" width="16" height="16" fill="#2b2a6b"/><path d="M1 4h14l-3.200 2.300H3.500l9 1L11.500 9.500H1.500l9 1.200-1 1.300H1z" fill="#fff"/><path d="M1 12.800h14v.9H1z" fill="#e03a3e" opacity=".6"/></svg>
<i class="abs" style="left:1405.25px;top:15.5px;width:1.200px;height:20px;background:#2c6a74"></i>
<svg class="abs" style="left:1411.75px;top:17.00px" width="16" height="16" viewBox="0 0 16 16"><text x="8" y="14" font-size="17" font-weight="700" fill="#0a5fb0" text-anchor="middle" font-family="Liberation Sans, sans-serif">S</text></svg>
<i class="abs" style="left:1433.25px;top:15.5px;width:1.200px;height:20px;background:#2c6a74"></i>
<svg class="abs" style="left:1439.75px;top:17.00px" width="16" height="16" viewBox="0 0 16 16"><rect x="0" y="0" width="16" height="16" fill="#121212"/><text x="8.200" y="13" font-size="13.500" font-weight="700" fill="#fff" text-anchor="middle" font-family="Liberation Serif, serif">F</text></svg>
<i class="abs" style="left:1461.25px;top:15.5px;width:1.200px;height:20px;background:#2c6a74"></i>
<svg class="abs" style="left:1467.75px;top:17.00px" width="16" height="16" viewBox="0 0 16 16"><path d="M0 7.800L8.100 3.100 16.100 7.800 8.100 12.500z" fill="#37474f"/><path d="M8.100 3.100L16.100 7.800 8.100 12.500z" fill="#29b6f6"/><path d="M0 7.800l8.100 4.700v3.600L0 11.500z" fill="#37474f"/><path d="M8.100 12.500l8-4.700v3.700l-8 4.600z" fill="#29b6f6"/><circle cx="8.100" cy="5.300" r="5.400" fill="#d9d9d9"/><circle cx="7.600" cy="4.600" r="4.200" fill="#ececec"/></svg>
<i class="abs" style="left:1489.25px;top:15.5px;width:1.200px;height:20px;background:#2c6a74"></i>
<svg class="abs" style="left:1495.75px;top:17.00px" width="16" height="16" viewBox="0 0 16 16"><path d="M0 7.800L8.100 3.100 16.100 7.800 8.100 12.500z" fill="#37474f"/><path d="M8.100 3.100L16.100 7.800 8.100 12.500z" fill="#29b6f6"/><path d="M0 7.800l8.100 4.700v3.600L0 11.500z" fill="#37474f"/><path d="M8.100 12.500l8-4.700v3.700l-8 4.600z" fill="#29b6f6"/><circle cx="8.100" cy="5.300" r="5.400" fill="#d9d9d9"/><circle cx="7.600" cy="4.600" r="4.200" fill="#ececec"/></svg>
<i class="abs" style="left:1517.25px;top:15.5px;width:1.200px;height:20px;background:#2c6a74"></i>
<svg class="abs" style="left:1523.75px;top:17.00px" width="16" height="16" viewBox="0 0 16 16"><rect x="0" y="0" width="16" height="16" fill="#3c1f70"/><path d="M6.500 3v7.500c0 1.800 1.200 2.600 3.200 2.600" fill="none" stroke="#fff" stroke-width="1.600"/></svg>
<i class="abs" style="left:1545.25px;top:15.5px;width:1.200px;height:20px;background:#2c6a74"></i>
<svg class="abs" style="left:1551.75px;top:17.00px" width="16" height="16" viewBox="0 0 16 16"><path d="M.800 2c2.500-.8 5-.8 7.200.5 2.200-1.300 4.700-1.300 7.200-.5-.3 5.500-2.500 9.800-7.200 13C3.300 11.800 1.100 7.500.8 2z" fill="#1d3a4a"/><path d="M4 4.500c1.300-.3 2.700-.1 4 .6 1.300-.7 2.700-.9 4-.6-.5 3-1.800 5.300-4 7.200-2.200-1.900-3.500-4.200-4-7.200z" fill="#50adb8"/><path d="M8 5.100v7.200" stroke="#1d3a4a" stroke-width=".8"/></svg>
<i class="abs" style="left:1573.25px;top:15.5px;width:1.200px;height:20px;background:#2c6a74"></i>
<svg class="abs" style="left:1579.75px;top:17.00px" width="16" height="16" viewBox="0 0 16 16"><path d="M1 15v-3.500l4 0v3.500zM1 9.500V6c5 0 8.500 3.500 8.500 9H6c0-3-2-5.500-5-5.500zM3 4.500V1c7 0 12 5 12 13.500h-3.500C11.500 8.500 8 4.500 3 4.500z" fill="#4cd41a"/></svg>
<i class="abs" style="left:1601.25px;top:15.5px;width:1.200px;height:20px;background:#2c6a74"></i>
<svg class="abs" style="left:1607.75px;top:17.00px" width="16" height="16" viewBox="0 0 16 16"><circle cx="8" cy="8" r="7" fill="#5b5f66"/><path d="M8.500 2.800C11 2.800 13 4.500 13.300 7c-1.300.2-1.800 1.200-2.800 1.400-1.200.2-1.500-.9-2.500-.6-1 .3-.8 1.400-1.800 1.400-.8 0-1.200-.8-.9-1.600.4-1 1.700-.8 2.200-1.600.5-.8-.2-1.500.1-2.300.2-.5.500-.8.900-.9z" fill="#50adb8"/><path d="M6.500 10.500c1-.3 2.300.1 2.700 1 .3.800-.4 1.500-1.200 1.700-1 .1-2-.5-2.200-1.400-.1-.6.200-1.100.7-1.300z" fill="#50adb8"/></svg>
<i class="abs" style="left:1629.25px;top:15.5px;width:1.200px;height:20px;background:#2c6a74"></i>
<svg class="abs" style="left:1635.75px;top:17.00px" width="16" height="16" viewBox="0 0 16 16"><circle cx="8" cy="8" r="7" fill="#5b5f66"/><path d="M8.500 2.800C11 2.800 13 4.500 13.300 7c-1.300.2-1.800 1.200-2.800 1.400-1.200.2-1.500-.9-2.500-.6-1 .3-.8 1.400-1.800 1.400-.8 0-1.200-.8-.9-1.600.4-1 1.700-.8 2.200-1.600.5-.8-.2-1.500.1-2.300.2-.5.500-.8.900-.9z" fill="#50adb8"/><path d="M6.500 10.500c1-.3 2.300.1 2.700 1 .3.800-.4 1.500-1.200 1.700-1 .1-2-.5-2.200-1.400-.1-.6.200-1.100.7-1.300z" fill="#50adb8"/></svg>
<i class="abs" style="left:1657.25px;top:15.5px;width:1.200px;height:20px;background:#2c6a74"></i>
<svg class="abs" style="left:1663.75px;top:17.00px" width="16" height="16" viewBox="0 0 16 16"><rect x="0" y="0" width="16" height="16" fill="#20b877"/><path d="M16 0v16H5z" fill="#3f5a55"/><path d="M9.500 0h5L5.500 16h-5z" fill="#fff"/></svg>
<i class="abs" style="left:1685.25px;top:15.5px;width:1.200px;height:20px;background:#2c6a74"></i>
<svg class="abs" style="left:1691.75px;top:17.00px" width="16" height="16" viewBox="0 0 16 16"><rect x="0" y="0" width="16" height="16" rx="2.600" fill="#0c1f4d"/><rect x="5.200" y="4" width="5.600" height="9" rx="1.200" fill="#dfe6f5"/><rect x="6.600" y="2.600" width="2.800" height="1.800" fill="#dfe6f5"/><path d="M5.200 6.500h5.600M5.200 8.500h5.600M5.200 10.500h5.600" stroke="#0c1f4d" stroke-width=".7"/></svg>
<i class="abs" style="left:1713.25px;top:15.5px;width:1.200px;height:20px;background:#2c6a74"></i>
<svg class="abs" style="left:1719.75px;top:17.00px" width="16" height="16" viewBox="0 0 16 16"><path d="M3 1.500l2.800-.5 1.700 4-2 1.500c.8 2.200 2.200 3.800 4.300 4.800l1.700-1.900 3.800 1.900-.6 2.900c-6.500.5-12-5-11.700-12.700z" fill="#1fa84a"/><path d="M9.500 2.500c2 .3 3.500 1.700 4 3.800M9.500 5c.9.200 1.500.800 1.700 1.600" fill="none" stroke="#1fa84a" stroke-width="1.300"/></svg>
<i class="abs" style="left:1741.25px;top:15.5px;width:1.200px;height:20px;background:#2c6a74"></i>
<svg class="abs" style="left:1747.75px;top:17.00px" width="16" height="16" viewBox="0 0 16 16"><circle cx="8" cy="8" r="8" fill="#fff"/><path d="M13.300 8.150c0-.4 0-.75-.1-1.100H8.100v2.100h2.900c-.1.700-.5 1.250-1.050 1.650v1.350h1.700c1-.9 1.650-2.300 1.650-4z" fill="#4285f4"/><path d="M8.100 13.400c1.450 0 2.650-.5 3.550-1.300l-1.700-1.350c-.5.300-1.100.5-1.850.5-1.400 0-2.600-.95-3-2.250H3.300v1.400c.9 1.800 2.700 3 4.800 3z" fill="#34a853"/><path d="M5.100 9c-.2-.65-.2-1.350 0-2V5.600H3.300c-.75 1.500-.75 3.300 0 4.800z" fill="#fbbc04"/><path d="M8.100 4.750c.8 0 1.500.3 2.050.8l1.500-1.500C10.750 3.200 9.550 2.600 8.100 2.600c-2.100 0-3.900 1.200-4.800 3L5.100 7c.4-1.300 1.600-2.250 3-2.250z" fill="#ea4335"/></svg>
<i class="abs" style="left:1769.25px;top:15.5px;width:1.200px;height:20px;background:#2c6a74"></i>
<svg class="abs" style="left:1775.75px;top:17.00px" width="16" height="16" viewBox="0 0 16 16"><rect x="0" y="0" width="16" height="16" rx="3" fill="#fff"/><text x="8" y="10" font-size="11.500" font-weight="700" fill="#111" text-anchor="middle" font-family="Liberation Sans, sans-serif">a</text><path d="M2.500 11.200c3.300 2.200 7.300 2.200 10.500.3" fill="none" stroke="#f90" stroke-width="1.300"/><path d="M12 10.800l1.800.2-.6 1.700" fill="none" stroke="#f90" stroke-width="1"/></svg>
<i class="abs" style="left:1797.25px;top:15.5px;width:1.200px;height:20px;background:#2c6a74"></i>
<svg class="abs" style="left:1812px;top:17px" width="16" height="16" viewBox="0 0 16 16"><path d="M8 2v12M2 8h12" stroke="#102025" stroke-width="1.800"/></svg>
<svg class="abs" style="left:1891px;top:18px" width="14" height="14" viewBox="0 0 14 14"><path d="M2.500 5l4.500 4.500L11.500 5" fill="none" stroke="#102025" stroke-width="1.700"/></svg>
<!--TABS_END-->
</div>

<!-- CHROME TOOLBAR -->
<div id="toolbar">

<svg class="abs" style="left:12px;top:12px" width="18" height="18" viewBox="0 0 18 18" fill="none" stroke="#1a2226" stroke-width="1.900"><path d="M16 9H3M8.800 3L2.800 9l6 6"/></svg>
<svg class="abs" style="left:45px;top:12px" width="18" height="18" viewBox="0 0 18 18" fill="none" stroke="#79989c" stroke-width="1.900"><path d="M2 9h13M9.200 3l6 6-6 6"/></svg>
<svg class="abs" style="left:77px;top:11px" width="20" height="20" viewBox="0 0 20 20"><path d="M15.200 6.500A6.200 6.200 0 1016.200 10" fill="none" stroke="#1a2226" stroke-width="2"/><path d="M16.600 2.500v5.300h-5.300z" fill="#1a2226"/></svg>
<svg class="abs" style="left:1793px;top:12px" width="18" height="18" viewBox="0 0 18 18"><path d="M7 2.200a1.800 1.800 0 013.600 0V3.500h3.200c.6 0 1 .4 1 1v2.800h1a1.900 1.900 0 010 3.800h-1V15c0 .6-.4 1-1 1h-3v-1.200a1.900 1.900 0 00-3.800 0V16H3.500c-.6 0-1-.4-1-1v-3.300h1.200a1.900 1.900 0 000-3.800H2.500V4.500c0-.6.400-1 1-1H7z" fill="#1a2226"/></svg>
<svg class="abs" style="left:1826px;top:13px" width="16" height="16" viewBox="0 0 16 16"><rect x="1.200" y="1.700" width="13.600" height="12.600" fill="none" stroke="#1a2226" stroke-width="2.200"/><rect x="9" y="1.700" width="5.800" height="12.600" fill="#1a2226"/></svg>
<i class="abs" style="left:1855px;top:9px;width:22px;height:22px;border-radius:11px;background:#f4f6f6"></i>
<svg class="abs" style="left:1857px;top:10px" width="18" height="20" viewBox="0 0 18 20"><circle cx="9" cy="8.500" r="6.700" fill="none" stroke="#222" stroke-width="1"/><path d="M7.800 5.500l4.600 3-4.600 3z" fill="none" stroke="#222" stroke-width=".9"/><path d="M5 5.800v5.400M6.300 5.500v6" stroke="#222" stroke-width=".9"/><rect x="3" y="16.200" width="12" height="1.600" fill="#222"/></svg>
<i class="abs" style="left:1896.500px;top:14px;width:3.600px;height:3.600px;border-radius:50%;background:#1a2226"></i>
<i class="abs" style="left:1896.500px;top:19.700px;width:3.600px;height:3.600px;border-radius:50%;background:#1a2226"></i>
<i class="abs" style="left:1896.500px;top:25.400px;width:3.600px;height:3.600px;border-radius:50%;background:#1a2226"></i>

<div id="url">
<svg class="abs" style="left:7px;top:7px" width="16" height="16" viewBox="0 0 16 16"><path fill="#5f6368" d="M4.500 7V5.200a3.500 3.500 0 017 0V7h.5c.600 0 1 .400 1 1v5c0 .600-.4 1-1 1H4c-.6 0-1-.4-1-1V8c0-.6.400-1 1-1zm1.500 0h4V5.200a2 2 0 00-4 0z"/></svg>
<div class="t" id="t_url"><b>studio.youtube.com</b>/channel/UCUJ2qlBEmN8psRXw5vBgL3w/analytics/tab-overview/period-quarter</div>

<svg class="abs" style="left:1612.500px;top:7.500px" width="15" height="17" viewBox="0 0 18 20" fill="none" stroke="#5f6368" stroke-width="1.500"><path d="M6 7H4.500v10.500h9V7H12"/><path d="M9 12.500V2M6.300 4.500L9 1.800l2.700 2.700"/></svg>
<svg class="abs" style="left:1643.500px;top:7.500px" width="17" height="17" viewBox="0 0 20 20" fill="none" stroke="#3c4043" stroke-width="1.600" stroke-linejoin="round"><path d="M10 2.500l2.300 5 5.400.6-4 3.700 1.100 5.400L10 14.500l-4.800 2.700 1.100-5.400-4-3.700 5.400-.6z"/></svg>

</div>
</div>

<!-- PAGE -->
<div id="page">
<div id="ythead">

<!-- hamburger -->
<i class="abs" style="left:29px;top:26px;width:18px;height:2px;background:#0f0f0f"></i>
<i class="abs" style="left:29px;top:32px;width:18px;height:2px;background:#0f0f0f"></i>
<i class="abs" style="left:29px;top:38px;width:18px;height:2px;background:#0f0f0f"></i>
<!-- logo -->
<svg class="abs" style="left:76px;top:19px" width="34" height="24" viewBox="0 0 34 24"><rect x="0" y="0" width="34" height="24" rx="7" fill="#ff0033"/><path d="M13.500 6.800v10.400l9-5.200z" fill="#fff"/></svg>
<div class="abs" style="left:115px;top:14px;font-size:29px;line-height:36px;font-weight:700;letter-spacing:-0.3px;-webkit-text-stroke:.700px #141414;transform:scaleX(.655);transform-origin:0 0;color:#141414;white-space:nowrap">Studio</div>
<!-- search -->
<div class="abs" style="left:576px;top:13px;width:768px;height:40px;border-radius:20px;background:#f0f0f0"></div>
<svg class="abs" style="left:592px;top:21px" width="24" height="24" viewBox="0 0 24 24" fill="none" stroke="#0f0f0f" stroke-width="2"><circle cx="11.500" cy="11.500" r="7.500"/><path d="M17 17l4 4" stroke-linecap="round"/></svg>
<div class="abs gry" style="left:633px;top:13px;line-height:40px;font-size:15.500px;white-space:nowrap" id="t_srch">Search across your channel</div>
<!-- right icons -->
<svg class="abs" style="left:1589px;top:21px" width="24" height="24" viewBox="0 0 24 24" fill="none" stroke="#0f0f0f" stroke-width="2" stroke-linejoin="round" stroke-linecap="round"><path d="M12.500 2.500H4.500a2 2 0 00-2 2V16a2 2 0 002 2H6v3.500L10.500 18H20a2 2 0 002-2V11.500"/><path d="M6.500 8h8M6.500 12h6" /><path d="M19.500 0c.4 2.700 1.800 4.100 4.500 4.500-2.700.4-4.100 1.800-4.500 4.500-.4-2.700-1.800-4.100-4.500-4.500 2.700-.4 4.100-1.800 4.500-4.500z" fill="#0f0f0f" stroke="none"/></svg>
<svg class="abs" style="left:1629px;top:21px" width="24" height="24" viewBox="0 0 24 24" fill="none" stroke="#0f0f0f" stroke-width="2"><circle cx="12" cy="12" r="9.500"/><path d="M9.200 9.600a2.900 2.900 0 115 2c-1 .9-2.100 1.400-2.100 3" stroke-linecap="round"/><circle cx="12.050" cy="17.300" r="1.200" fill="#0f0f0f" stroke="none"/></svg>
<svg class="abs" style="left:1669px;top:21px" width="24" height="24" viewBox="0 0 24 24"><path fill="#0f0f0f" d="M12 1C12.800 7.300 16.700 11.200 23 12 16.700 12.800 12.800 16.700 12 23 11.200 16.700 7.300 12.800 1 12 7.300 11.200 11.200 7.300 12 1z"/></svg>
<svg class="abs" style="left:1709px;top:21px" width="24" height="24" viewBox="0 0 24 24" fill="none" stroke="#0f0f0f" stroke-width="2" stroke-linejoin="round"><path d="M12 2.500a6 6 0 00-6 6v4.800L3.700 17.500h16.600L18 13.300V8.500a6 6 0 00-6-6z"/><path d="M9.800 20.500a2.300 2.300 0 004.400 0" stroke-linecap="round"/></svg>
<i class="abs" style="left:1721.500px;top:23.500px;width:10px;height:10px;border-radius:5px;background:#ff0033;box-shadow:0 0 0 1.500px #fff"></i>
<div class="abs" style="left:1749px;top:15px;width:97px;height:36px;border:1px solid #d9d9d9;border-radius:18px"></div>
<svg class="abs" style="left:1759px;top:21px" width="24" height="24" viewBox="0 0 24 24" fill="none" stroke="#0f0f0f" stroke-width="2" stroke-linejoin="round" stroke-linecap="round"><rect x="2" y="4.500" width="15" height="15" rx="2.500"/><path d="M17 10.200l5-3v9.600l-5-3z"/><path d="M9.500 8.500v7M6 12h7"/></svg>
<div class="abs" style="left:1789px;top:15px;line-height:36px;font-size:14.800px;-webkit-text-stroke:.5px #0f0f0f;white-space:nowrap" id="t_cr">Create</div>
<!-- avatar -->
<div class="abs" style="left:1862px;top:17px;width:32px;height:32px;border-radius:16px;background:#fcfcfc"></div>
<svg class="abs" style="left:1868px;top:23px" width="22" height="20" viewBox="0 0 22 20"><rect x="2" y="5" width="1.600" height="10" fill="#777"/><rect x="4.200" y="3.500" width="2.600" height="13" rx="1" fill="#333"/><path d="M7.500 3.500l10.500 5.800-10.500 6.700z" fill="#444"/><path d="M9.600 7.200l5 2.600-5 3z" fill="#fff"/><path d="M10 0.500l2 3" stroke="#bbb" stroke-width=".6"/></svg>

</div>
<div id="side">

<div class="abs" style="left:71px;top:23px;width:112px;height:112px;border-radius:56px;background:#fdfdfd"></div>
<svg class="abs" style="left:95px;top:43px" width="64" height="62" viewBox="95 215 64 62">
<rect x="100.800" y="244.800" width="2" height="13.200" rx="1" fill="#0c0c0c"/>
<path d="M108.500 233.200c-2.400 0-3.800 1.200-3.900 3.400-.5 10.500-.5 21 0 31.600.1 2.300 1.500 3.800 3.900 3.800h2c-1.300-1-1.600-2.400-1.700-4.200-.4-10.400-.4-20.600 0-31 .1-1.700.4-2.800 1.700-3.600z" fill="#0c0c0c"/>
<path d="M116 233.200c-3 0-4.700 1.300-4.800 3.700-.5 10.400-.5 20.700 0 31.100.1 2.600 1.800 4 4.800 4 2.200 0 3.500-.2 5.500-.6 9.500-1.800 18.500-3.500 28.500-5.800-8.500 1.500-19.500 3-29 4.700-2.700.5-4.500-.3-4.700-3.300-.5-9.600-.5-19.200 0-28.700.2-2.700 1.800-3.500 4.500-3.100 11 1.700 22 3 33.200 5.800-2-1.400-5-2.300-9-3.100-8.500-1.600-16.500-3-24.500-4.300-1.700-.3-3-.4-4.500-.4z" fill="#0c0c0c"/>
<path d="M122.800 237l26.500 16.300-26.500 15.600z" fill="#0c0c0c"/>
<path d="M124.400 221.100l7.400 13.900M136.800 226l-3.500 9" stroke="#333" stroke-width=".7" fill="none"/>
<text x="124.300" y="258" font-family="Liberation Sans, sans-serif" font-weight="700" font-size="13.400" fill="#fff" textLength="15.800" lengthAdjust="spacingAndGlyphs">TBT</text>
</svg>
<div class="abs" style="left:0;top:152px;width:255px;text-align:center;font-size:15.200px;-webkit-text-stroke:.5px #0f0f0f;line-height:20px;white-space:nowrap" id="t_yc">Your channel</div>
<div class="abs gry" style="left:0;top:175px;width:255px;text-align:center;font-size:12.200px;line-height:18px;white-space:nowrap;letter-spacing:.1px" id="t_tbt">TBT Networks</div>

<div class="nav" style="top:208px;height:48px"><svg viewBox="0 0 24 24" fill="none" stroke="#0f0f0f" stroke-width="1.900" stroke-linejoin="round" stroke-linecap="round"><rect x="3" y="3" width="7.500" height="9.500" rx="1.500"/><rect x="14" y="3" width="7.500" height="5.500" rx="1.500"/><rect x="3" y="15.500" width="7.500" height="5.500" rx="1.500"/><rect x="14" y="11.500" width="7.500" height="9.500" rx="1.500"/></svg><span id="t_nv1" style="line-height:48px">Dashboard</span></div>
<div class="nav" style="top:256px;height:48px"><svg viewBox="0 0 24 24" fill="none" stroke="#0f0f0f" stroke-width="1.900" stroke-linejoin="round" stroke-linecap="round"><rect x="6.500" y="3" width="15" height="15" rx="2"/><path d="M3 7v12a2 2 0 002 2h12"/><path d="M11.500 7.300v6.400l5.300-3.200z" fill="#0f0f0f" stroke="none"/></svg><span id="t_nv2" style="line-height:48px">Content</span></div>
<div class="nav sel" style="top:304px;height:48px"><svg viewBox="0 0 24 24"><rect x="2" y="2.500" width="20" height="19.500" rx="2.500" fill="#0f0f0f"/><rect x="6.300" y="11" width="2.300" height="6.500" fill="#fff"/><rect x="10.900" y="7.500" width="2.300" height="10" fill="#fff"/><rect x="15.500" y="13" width="2.300" height="4.500" fill="#fff"/></svg><span id="t_nv3" style="line-height:48px">Analytics</span></div>
<div class="nav" style="top:352px;height:48px"><svg viewBox="0 0 24 24" fill="none" stroke="#0f0f0f" stroke-width="1.900" stroke-linejoin="round" stroke-linecap="round"><circle cx="12" cy="10.500" r="2.800"/><path d="M6.500 21c0-3.200 2.400-5.200 5.500-5.200s5.500 2 5.500 5.200"/><path d="M3.800 6.300a2.600 2.600 0 013.800-1.600M6.200 9.800a2.600 2.600 0 01-2.300-1.700"/><path d="M20.200 6.300a2.600 2.600 0 00-3.800-1.600M17.800 9.800a2.600 2.600 0 002.300-1.700"/><path d="M.9 17.500c.2-2.400 1.800-4.100 4.300-4.500"/><path d="M23.100 17.500c-.2-2.400-1.800-4.100-4.300-4.500"/></svg><span id="t_nv4" style="line-height:48px">Community</span></div>
<div class="nav" style="top:400px;height:48px"><svg viewBox="0 0 24 24" fill="none" stroke="#0f0f0f" stroke-width="1.900" stroke-linejoin="round" stroke-linecap="round"><rect x="1.500" y="4" width="21" height="16" rx="1.500"/><path d="M5.500 12.500h5M13.500 12.500h5M5.500 16h8M16.500 16h2" stroke-linecap="butt"/></svg><span id="t_nv5" style="line-height:48px">Languages</span></div>
<div class="nav" style="top:448px;height:48px"><svg viewBox="0 0 24 24" fill="none" stroke="#0f0f0f" stroke-width="1.900" stroke-linejoin="round" stroke-linecap="round"><circle cx="12" cy="12" r="10"/><path d="M15.300 9.500a4.200 4.200 0 100 5" stroke-width="2.100"/></svg><span id="t_nv6" style="line-height:48px">Content detection</span></div>
<div class="nav" style="top:496px;height:48px"><svg viewBox="0 0 24 24" fill="none" stroke="#0f0f0f" stroke-width="1.900" stroke-linejoin="round" stroke-linecap="round"><circle cx="12" cy="12" r="10"/><path d="M14.800 9.300c-.4-1-1.400-1.600-2.800-1.600-1.600 0-2.800.8-2.800 2.100 0 3 5.800 1.300 5.800 4.400 0 1.300-1.200 2.100-2.900 2.100-1.500 0-2.600-.7-3-1.800M12 5.800v12.400" stroke-width="1.700"/></svg><span id="t_nv7" style="line-height:48px">Earn</span></div>
<div class="nav" style="top:544px;height:48px"><svg viewBox="0 0 24 24" fill="none" stroke="#0f0f0f" stroke-width="1.900" stroke-linejoin="round" stroke-linecap="round"><rect x="7.300" y="5.500" width="4.600" height="18" rx="1.600" transform="rotate(45 9.600 14.500)"/><path d="M11.200 9.600l3.300 3.300"/><g fill="#0f0f0f" stroke="none"><path d="M7 2l.8 2.200L10 5l-2.200.8L7 8l-.8-2.200L4 5l2.200-.8z"/><path d="M18.500 1.500l.9 2.600 2.600.9-2.600.9-.9 2.600-.9-2.600L15 5l2.600-.9z"/><path d="M19 13.500l.9 2.600 2.600.9-2.600.9-.9 2.600-.9-2.600-2.600-.9 2.600-.9z"/></g></svg><span id="t_nv8" style="line-height:48px">Customization</span></div>
<div class="nav" style="top:592px;height:48px"><svg viewBox="0 0 24 24" fill="none" stroke="#0f0f0f" stroke-width="1.900" stroke-linejoin="round" stroke-linecap="round"><rect x="6.500" y="2.500" width="15" height="15" rx="2"/><path d="M3 6.500v12a2 2 0 002 2h12"/><circle cx="12.800" cy="12.300" r="1.900" fill="#0f0f0f" stroke-width="1"/><path d="M14.700 12.300V6.200h2.800" stroke-width="1.700"/></svg><span id="t_nv9" style="line-height:48px">Audio library</span></div>
<div class="nav" style="top:730px;height:48px"><svg viewBox="0 0 24 24" fill="none" stroke="#0f0f0f" stroke-width="1.900" stroke-linejoin="round" stroke-linecap="round"><circle cx="12" cy="12" r="3.200"/><path d="M10.200 2.300h3.600l.9 2.800 1.300.7 2.900-.6 1.800 3.100-2 2.200v1.500l2 2.200-1.800 3.100-2.900-.6-1.300.7-.9 2.800h-3.600l-.9-2.800-1.300-.7-2.900.6-1.800-3.100 2-2.200v-1.500l-2-2.200 1.800-3.100 2.900.6 1.300-.7z"/></svg><span id="t_nv10" style="line-height:48px">Settings</span></div>
<div class="nav" style="top:778px;height:48px"><svg viewBox="0 0 24 24" fill="none" stroke="#0f0f0f" stroke-width="1.900" stroke-linejoin="round" stroke-linecap="round"><path d="M4.500 3.500h15a2 2 0 012 2V16a2 2 0 01-2 2H11l-4.500 3.500V18h-2a2 2 0 01-2-2V5.500a2 2 0 012-2z"/><path d="M12 7v5"/><circle cx="12" cy="15" r="1.100" fill="#0f0f0f" stroke="none"/></svg><span id="t_nv11" style="line-height:48px">Send feedback</span></div>
</div>
<div id="main">
<!--MAIN_START-->
<div class="abs" id="t_ca" style="left:32px;top:22px;font-size:24px;font-weight:400;-webkit-text-stroke:.700px #0f0f0f;line-height:36px;white-space:nowrap;letter-spacing:-.6px">Channel analytics</div>
<div class="pill" style="left:1121px;top:19px;width:133px"><span id="t_am">Advanced mode</span></div>
<div class="chip" style="left:24px;width:266px"><svg viewBox="0 0 24 24"><path fill="#0f0f0f" d="M12 .5C12.700 7.300 16.700 11.300 23.500 12 16.700 12.700 12.700 16.700 12 23.500 11.300 16.700 7.300 12.700 .5 12 7.300 11.300 11.300 7.300 12 .5z"/></svg><span id="t_c1">How did viewers find my content?</span></div>
<div class="chip" style="left:306px;width:279px"><svg viewBox="0 0 24 24"><path fill="#0f0f0f" d="M12 .5C12.700 7.300 16.700 11.300 23.500 12 16.700 12.700 12.700 16.700 12 23.500 11.300 16.700 7.300 12.700 .5 12 7.300 11.300 11.300 7.300 12 .5z"/></svg><span id="t_c2">How many new viewers did I reach?</span></div>
<div class="chip" style="left:601px;width:310px"><svg viewBox="0 0 24 24"><path fill="#0f0f0f" d="M12 .5C12.700 7.300 16.700 11.300 23.500 12 16.700 12.700 12.700 16.700 12 23.500 11.300 16.700 7.300 12.700 .5 12 7.300 11.300 11.300 7.300 12 .5z"/></svg><span id="t_c3">Summarize my latest video performance</span></div>
<i class="abs" style="left:936.8px;top:78.3px;width:4.400px;height:4.400px;border-radius:50%;background:#0f0f0f"></i>
<i class="abs" style="left:936.8px;top:85.3px;width:4.400px;height:4.400px;border-radius:50%;background:#0f0f0f"></i>
<i class="abs" style="left:936.8px;top:92.3px;width:4.400px;height:4.400px;border-radius:50%;background:#0f0f0f"></i>
<div class="tab" id="t_tb1" style="left:32px;top:130.7px;color:#0f0f0f;-webkit-text-stroke:.35px #0f0f0f;">Overview</div>
<div class="tab" id="t_tb2" style="left:134px;top:130.7px;-webkit-text-stroke:.2px #606060;">Content</div>
<div class="tab" id="t_tb3" style="left:227px;top:130.7px;-webkit-text-stroke:.2px #606060;">Audience</div>
<div class="tab" id="t_tb4" style="left:330.5px;top:130.7px;-webkit-text-stroke:.2px #606060;">Trends</div>
<i class="abs" style="left:32px;top:175.5px;width:61.500px;height:2.500px;background:#0f0f0f"></i>
<i class="abs" style="left:0;top:178px;width:1649px;height:1px;background:#e2e2e2"></i>
<div class="abs gry" id="t_d1" style="left:1026px;top:122px;font-size:12.300px;line-height:18px;white-space:nowrap">Dec 25, 2025 – Mar 24, 2026</div>
<div class="abs" id="t_d2" style="left:1026px;top:140px;font-size:15.300px;line-height:22px;white-space:nowrap">Last 90 days</div>
<svg class="abs" style="left:1230px;top:133.5px" width="20" height="20" viewBox="0 0 20 20" fill="none" stroke="#0f0f0f" stroke-width="2.200"><path d="M3.200 6.500l6.800 6.800 6.800-6.800"/></svg>
<div class="abs" style="left:23.5px;top:208px;width:885px;text-align:center;font-size:28.500px;font-weight:700;line-height:40px;white-space:nowrap;letter-spacing:-1.300px"><span id="t_hl">Your channel got 780,372 views in the last 90 days</span></div>
<div class="card" style="left:24.3px;top:289.2px;width:885.500px;height:423.500px;overflow:hidden">
<div class="abs" style="left:294.2px;top:0;width:591px;height:107.8px;background:#f8f8f8"></div>
<i class="abs" style="left:293.7px;top:0;width:1px;height:107.8px;background:#e0e0e0"></i>
<i class="abs" style="left:588.7px;top:0;width:1px;height:107.8px;background:#e0e0e0"></i>
<div class="abs gry" style="left:-0.3px;top:15.8px;width:294px;text-align:center;font-size:12.500px;line-height:18px;-webkit-text-stroke:.25px #606060;letter-spacing:.15px"><span id="t_s1a">Views</span></div>
<div class="abs" id="t_s1b" style="left:97.0px;top:35.8px;font-size:24.200px;line-height:32px;white-space:nowrap;letter-spacing:-.3px">780.4K</div>
<svg class="abs" style="left:176.9px;top:42.3px" width="19" height="19" viewBox="0 0 19 19"><circle cx="9.500" cy="9.500" r="9.300" fill="#0b6a0b"/><path d="M9.500 14.300V5.200M5.600 8.900l3.900-3.900 3.900 3.900" fill="none" stroke="#fff" stroke-width="1.900"/></svg>
<div class="abs gry" style="left:-0.3px;top:72.8px;width:294px;text-align:center;font-size:12.500px;font-style:italic;line-height:18px;white-space:nowrap"><span id="t_s1c">&gt;999% more than previous 90 days</span></div>
<div class="abs gry" style="left:294.7px;top:15.8px;width:294px;text-align:center;font-size:12.500px;line-height:18px;-webkit-text-stroke:.25px #606060;letter-spacing:.15px"><span id="t_s2a">Watch time (hours)</span></div>
<div class="abs" id="t_s2b" style="left:399.4px;top:35.8px;font-size:24.200px;line-height:32px;white-space:nowrap;letter-spacing:-.3px">10.6K</div>
<svg class="abs" style="left:465.2px;top:42.3px" width="19" height="19" viewBox="0 0 19 19"><circle cx="9.500" cy="9.500" r="9.300" fill="#0b6a0b"/><path d="M9.500 14.300V5.200M5.600 8.900l3.900-3.900 3.900 3.900" fill="none" stroke="#fff" stroke-width="1.900"/></svg>
<div class="abs gry" style="left:294.7px;top:72.8px;width:294px;text-align:center;font-size:12.500px;font-style:italic;line-height:18px;white-space:nowrap"><span id="t_s2c">&gt;999% more than previous 90 days</span></div>
<div class="abs gry" style="left:589.7px;top:15.8px;width:294px;text-align:center;font-size:12.500px;line-height:18px;-webkit-text-stroke:.25px #606060;letter-spacing:.15px"><span id="t_s3a">Subscribers</span></div>
<div class="abs" id="t_s3b" style="left:693.7px;top:35.8px;font-size:24.200px;line-height:32px;white-space:nowrap;letter-spacing:-.3px">+3.8K</div>
<svg class="abs" style="left:759.9px;top:42.3px" width="19" height="19" viewBox="0 0 19 19"><circle cx="9.500" cy="9.500" r="9.300" fill="#0b6a0b"/><path d="M9.500 14.300V5.200M5.600 8.900l3.900-3.900 3.900 3.900" fill="none" stroke="#fff" stroke-width="1.900"/></svg>
<div class="abs gry" style="left:589.7px;top:72.8px;width:294px;text-align:center;font-size:12.500px;font-style:italic;line-height:18px;white-space:nowrap"><span id="t_s3c">&gt;999% more than previous 90 days</span></div>
<svg class="abs" style="left:13.7px;top:137.8px" width="870" height="200" viewBox="0 0 870 200" font-family="Liberation Sans, sans-serif">
<rect x="10" y="25.5" width="758" height="1.200" fill="#e3e3e3"/>
<rect x="10" y="62.200000000000045" width="758" height="1.200" fill="#e3e3e3"/>
<rect x="10" y="98.79999999999995" width="758" height="1.200" fill="#e3e3e3"/>
<rect x="10" y="135.4" width="758" height="1.300" fill="#8a8a8a"/>
<polygon points="10.0,136 10.0,135.7 18.5,135.7 27.0,135.7 35.6,135.7 44.1,135.7 52.6,135.7 61.1,135.7 69.6,135.7 78.1,135.7 86.7,135.7 95.2,135.7 103.7,135.7 112.2,135.7 120.7,135.7 129.2,135.7 137.8,135.7 146.3,135.7 154.8,135.7 163.3,135.7 171.8,135.7 180.3,135.7 188.9,135.7 197.4,135.7 205.9,135.7 214.4,135.7 222.9,135.7 231.4,135.7 240.0,135.7 248.5,133.7 257.0,133.5 265.5,134.5 274.0,133.5 282.5,135.2 291.1,133.5 299.6,134.2 308.1,135.5 316.6,135.7 325.1,135.7 333.6,135.2 342.2,133.5 350.7,134.2 359.2,132.5 367.7,127.7 376.2,87.7 384.7,89.7 393.3,99.7 401.8,116.4 410.3,124.7 418.8,118.0 427.3,48.9 435.8,88.0 444.4,113.9 452.9,102.9 461.4,108.4 469.9,108.4 478.4,117.0 486.9,127.4 495.5,130.4 504.0,132.7 512.5,131.7 521.0,131.7 529.5,126.4 538.0,126.4 546.6,127.4 555.1,125.4 563.6,123.7 572.1,124.7 580.6,129.4 589.1,129.7 597.7,132.7 606.2,133.7 614.7,134.7 623.2,133.7 631.7,134.7 640.2,134.7 648.8,133.7 657.3,134.7 665.8,133.7 674.3,134.7 682.8,134.4 691.3,135.4 699.9,134.7 708.4,134.4 716.9,133.4 725.4,133.4 733.9,125.0 742.4,121.7 751.0,91.4 759.5,98.4 768.0,114.7 768.0,136" fill="#2596be" fill-opacity=".1"/>
<polyline points="10.0,135.7 18.5,135.7 27.0,135.7 35.6,135.7 44.1,135.7 52.6,135.7 61.1,135.7 69.6,135.7 78.1,135.7 86.7,135.7 95.2,135.7 103.7,135.7 112.2,135.7 120.7,135.7 129.2,135.7 137.8,135.7 146.3,135.7 154.8,135.7 163.3,135.7 171.8,135.7 180.3,135.7 188.9,135.7 197.4,135.7 205.9,135.7 214.4,135.7 222.9,135.7 231.4,135.7 240.0,135.7 248.5,133.7 257.0,133.5 265.5,134.5 274.0,133.5 282.5,135.2 291.1,133.5 299.6,134.2 308.1,135.5 316.6,135.7 325.1,135.7 333.6,135.2 342.2,133.5 350.7,134.2 359.2,132.5 367.7,127.7 376.2,87.7 384.7,89.7 393.3,99.7 401.8,116.4 410.3,124.7 418.8,118.0 427.3,48.9 435.8,88.0 444.4,113.9 452.9,102.9 461.4,108.4 469.9,108.4 478.4,117.0 486.9,127.4 495.5,130.4 504.0,132.7 512.5,131.7 521.0,131.7 529.5,126.4 538.0,126.4 546.6,127.4 555.1,125.4 563.6,123.7 572.1,124.7 580.6,129.4 589.1,129.7 597.7,132.7 606.2,133.7 614.7,134.7 623.2,133.7 631.7,134.7 640.2,134.7 648.8,133.7 657.3,134.7 665.8,133.7 674.3,134.7 682.8,134.4 691.3,135.4 699.9,134.7 708.4,134.4 716.9,133.4 725.4,133.4 733.9,125.0 742.4,121.7 751.0,91.4 759.5,98.4 768.0,114.7" fill="none" stroke="#2596be" stroke-width="2" stroke-linejoin="round"/>
<rect x="10" y="165.29999999999995" width="758" height="1.700" fill="#c2c2c2"/>
<rect x="9.7" y="166" width="1" height="5.500" fill="#cfcfcf"/>
<rect x="137.5" y="166" width="1" height="5.500" fill="#cfcfcf"/>
<rect x="265.2" y="166" width="1" height="5.500" fill="#cfcfcf"/>
<rect x="392.99999999999994" y="166" width="1" height="5.500" fill="#cfcfcf"/>
<rect x="512.2" y="166" width="1" height="5.500" fill="#cfcfcf"/>
<rect x="639.9000000000001" y="166" width="1" height="5.500" fill="#cfcfcf"/>
<rect x="767.2" y="166" width="1" height="5.500" fill="#cfcfcf"/>
<text x="788" y="29.7" font-size="11.900" fill="#606060">120.0K</text>
<text x="788" y="66.7" font-size="11.900" fill="#606060">80.0K</text>
<text x="788" y="102.99999999999996" font-size="11.900" fill="#606060">40.0K</text>
<text x="788" y="139.7" font-size="11.900" fill="#606060">0</text>
<text x="10" y="186.5" font-size="11.800" fill="#606060" text-anchor="start">Dec 25, 2...</text>
<text x="137.8" y="186.5" font-size="11.800" fill="#606060" text-anchor="middle">Jan 9, 2026</text>
<text x="265.5" y="186.5" font-size="11.800" fill="#606060" text-anchor="middle">Jan 24, 2026</text>
<text x="393.29999999999995" y="186.5" font-size="11.800" fill="#606060" text-anchor="middle">Feb 8, 2026</text>
<text x="512.5" y="186.5" font-size="11.800" fill="#606060" text-anchor="middle">Feb 22, 2026</text>
<text x="640.2" y="186.5" font-size="11.800" fill="#606060" text-anchor="middle">Mar 9, 2026</text>
<text x="768" y="186.5" font-size="11.800" fill="#606060" text-anchor="end">Mar 24, 2...</text>
<rect x="521.7" y="143.3" width="16" height="16" rx="2" fill="#484848"/>
<text x="529.7" y="154.9" font-size="10" fill="#fff" text-anchor="middle">9+</text>
<rect x="547.3" y="143.3" width="16" height="16" rx="2" fill="#484848"/>
<text x="555.3" y="154.9" font-size="10" fill="#fff" text-anchor="middle">7</text>
<rect x="572.7" y="143.3" width="16" height="16" rx="2" fill="#484848"/>
<text x="580.7" y="154.9" font-size="10" fill="#fff" text-anchor="middle">9+</text>
<rect x="598.3" y="143.3" width="16" height="16" rx="2" fill="#484848"/>
<text x="606.3" y="154.9" font-size="10" fill="#fff" text-anchor="middle">4</text>
<rect x="632.2" y="143.3" width="16" height="16" rx="2" fill="#484848"/>
<text x="640.2" y="154.9" font-size="10" fill="#fff" text-anchor="middle">7</text>
<rect x="657.7" y="143.3" width="16" height="16" rx="2" fill="#484848"/>
<text x="665.7" y="154.9" font-size="10" fill="#fff" text-anchor="middle">7</text>
<rect x="691.8" y="143.3" width="16" height="16" rx="2" fill="#484848"/>
<text x="699.8" y="154.9" font-size="10" fill="#fff" text-anchor="middle">4</text>
<rect x="717.3" y="143.3" width="16" height="16" rx="2" fill="#484848"/>
<text x="725.3" y="154.9" font-size="10" fill="#fff" text-anchor="middle">4</text>
<rect x="743.0" y="143.3" width="16" height="16" rx="2" fill="#484848"/>
<text x="751.0" y="154.9" font-size="10" fill="#fff" text-anchor="middle">9+</text>
</svg>
<div class="pill" style="left:23.7px;top:361.8px;width:91px"><span id="t_sm1">See more</span></div>
</div>
<i class="abs" style="left:425px;top:736.5px;width:83px;height:1px;background:#e8e8e8"></i>
<div class="abs" style="left:24px;top:782px;width:885px;text-align:center;font-size:19px;-webkit-text-stroke:.600px #0f0f0f;line-height:28px;white-space:nowrap"><span id="t_tc">Your top content in this period</span></div>
<div class="card" style="left:950.2px;top:194.8px;width:314px;height:572px">
<div class="abs" id="t_rt" style="left:15.8px;top:13.2px;font-size:18.500px;line-height:26px;-webkit-text-stroke:.600px #0f0f0f;white-space:nowrap">Realtime</div>
<i class="abs" style="left:15.8px;top:43.6px;width:8px;height:8px;border-radius:4px;background:#2596be"></i>
<div class="abs gry" id="t_ul" style="left:27.8px;top:39.0px;font-size:13px;line-height:18px;white-space:nowrap">Updating live</div>
<i class="abs" style="left:15.8px;top:72.4px;width:280px;height:1px;background:#e2e2e2"></i>
<div class="abs" id="t_n1" style="left:15.8px;top:88.2px;font-size:18.500px;line-height:26px;-webkit-text-stroke:.4px #0f0f0f;white-space:nowrap">15,872</div>
<div class="abs gry" id="t_sb" style="left:15.8px;top:114.0px;font-size:13px;line-height:18px;white-space:nowrap">Subscribers</div>
<div class="pill" style="left:15.8px;top:143.2px;width:119px"><span id="t_slc">See live count</span></div>
<i class="abs" style="left:15.8px;top:191.2px;width:280px;height:1px;background:#e2e2e2"></i>
<div class="abs" id="t_n2" style="left:15.8px;top:207.0px;font-size:18.500px;line-height:26px;-webkit-text-stroke:.4px #0f0f0f;white-space:nowrap">37,942</div>
<div class="abs gry" id="t_v48" style="left:15.8px;top:233.0px;font-size:13px;line-height:18px;white-space:nowrap">Views · Last 48 hours</div>
<svg class="abs" style="left:15.8px;top:262.2px" width="280" height="42" viewBox="0 0 280 42"><path d="M0.20 40V6.01q0-1 1-1h2.200q1 0 1 1V40z" fill="#2596be"/><path d="M6.04 40V18.97q0-1 1-1h2.200q1 0 1 1V40z" fill="#2596be"/><path d="M11.88 40V27.07q0-1 1-1h2.200q1 0 1 1V40z" fill="#2596be"/><path d="M17.72 40V30.31q0-1 1-1h2.200q1 0 1 1V40z" fill="#2596be"/><path d="M23.56 40V31.28q0-1 1-1h2.200q1 0 1 1V40z" fill="#2596be"/><path d="M29.40 40V33.55q0-1 1-1h2.200q1 0 1 1V40z" fill="#2596be"/><path d="M35.24 40V31.28q0-1 1-1h2.200q1 0 1 1V40z" fill="#2596be"/><path d="M41.08 40V29.34q0-1 1-1h2.200q1 0 1 1V40z" fill="#2596be"/><path d="M46.92 40V28.04q0-1 1-1h2.200q1 0 1 1V40z" fill="#2596be"/><path d="M52.76 40V27.07q0-1 1-1h2.200q1 0 1 1V40z" fill="#2596be"/><path d="M58.60 40V25.45q0-1 1-1h2.200q1 0 1 1V40z" fill="#2596be"/><path d="M64.44 40V25.45q0-1 1-1h2.200q1 0 1 1V40z" fill="#2596be"/><path d="M70.28 40V24.48q0-1 1-1h2.200q1 0 1 1V40z" fill="#2596be"/><path d="M76.12 40V24.48q0-1 1-1h2.200q1 0 1 1V40z" fill="#2596be"/><path d="M81.96 40V25.45q0-1 1-1h2.200q1 0 1 1V40z" fill="#2596be"/><path d="M87.80 40V24.48q0-1 1-1h2.200q1 0 1 1V40z" fill="#2596be"/><path d="M93.64 40V20.59q0-1 1-1h2.200q1 0 1 1V40z" fill="#2596be"/><path d="M99.48 40V23.18q0-1 1-1h2.200q1 0 1 1V40z" fill="#2596be"/><path d="M105.32 40V19.30q0-1 1-1h2.200q1 0 1 1V40z" fill="#2596be"/><path d="M111.16 40V19.30q0-1 1-1h2.200q1 0 1 1V40z" fill="#2596be"/><path d="M117.00 40V19.30q0-1 1-1h2.200q1 0 1 1V40z" fill="#2596be"/><path d="M122.84 40V17.35q0-1 1-1h2.200q1 0 1 1V40z" fill="#2596be"/><path d="M128.68 40V21.24q0-1 1-1h2.200q1 0 1 1V40z" fill="#2596be"/><path d="M134.52 40V20.59q0-1 1-1h2.200q1 0 1 1V40z" fill="#2596be"/><path d="M140.36 40V19.30q0-1 1-1h2.200q1 0 1 1V40z" fill="#2596be"/><path d="M146.20 40V23.18q0-1 1-1h2.200q1 0 1 1V40z" fill="#2596be"/><path d="M152.04 40V27.07q0-1 1-1h2.200q1 0 1 1V40z" fill="#2596be"/><path d="M157.88 40V31.28q0-1 1-1h2.200q1 0 1 1V40z" fill="#2596be"/><path d="M163.72 40V31.28q0-1 1-1h2.200q1 0 1 1V40z" fill="#2596be"/><path d="M169.56 40V34.20q0-1 1-1h2.200q1 0 1 1V40z" fill="#2596be"/><path d="M175.40 40V34.20q0-1 1-1h2.200q1 0 1 1V40z" fill="#2596be"/><path d="M181.24 40V33.55q0-1 1-1h2.200q1 0 1 1V40z" fill="#2596be"/><path d="M187.08 40V31.28q0-1 1-1h2.200q1 0 1 1V40z" fill="#2596be"/><path d="M192.92 40V31.28q0-1 1-1h2.200q1 0 1 1V40z" fill="#2596be"/><path d="M198.76 40V30.31q0-1 1-1h2.200q1 0 1 1V40z" fill="#2596be"/><path d="M204.60 40V30.31q0-1 1-1h2.200q1 0 1 1V40z" fill="#2596be"/><path d="M210.44 40V29.34q0-1 1-1h2.200q1 0 1 1V40z" fill="#2596be"/><path d="M216.28 40V25.45q0-1 1-1h2.200q1 0 1 1V40z" fill="#2596be"/><path d="M222.12 40V25.45q0-1 1-1h2.200q1 0 1 1V40z" fill="#2596be"/><path d="M227.96 40V31.28q0-1 1-1h2.200q1 0 1 1V40z" fill="#2596be"/><path d="M233.80 40V32.25q0-1 1-1h2.200q1 0 1 1V40z" fill="#2596be"/><path d="M239.64 40V31.28q0-1 1-1h2.200q1 0 1 1V40z" fill="#2596be"/><path d="M245.48 40V31.28q0-1 1-1h2.200q1 0 1 1V40z" fill="#2596be"/><path d="M251.32 40V26.10q0-1 1-1h2.200q1 0 1 1V40z" fill="#2596be"/><path d="M257.16 40V23.18q0-1 1-1h2.200q1 0 1 1V40z" fill="#2596be"/><path d="M263.00 40V25.13q0-1 1-1h2.200q1 0 1 1V40z" fill="#2596be"/><path d="M268.84 40V25.13q0-1 1-1h2.200q1 0 1 1V40z" fill="#2596be"/><path d="M274.68 40L278.88 40L276.78 37.5z" fill="#2596be"/><rect x="0" y="40" width="280" height="1" fill="#d0d0d0"/></svg>
<div class="abs gry" style="left:15.8px;top:310.2px;font-size:12px;line-height:18px">-48h</div>
<div class="abs gry" style="left:215.8px;top:310.2px;width:80px;text-align:right;font-size:12px;line-height:18px">Now</div>
<div class="abs gry" id="t_tc2" style="left:15.8px;top:349.2px;font-size:13px;line-height:18px">Top content</div>
<div class="abs gry" style="left:215.8px;top:349.2px;width:80px;text-align:right;font-size:13px;line-height:18px"><span id="t_vw">Views</span></div>
<div class="abs" style="left:15.8px;top:386.2px;width:56px;height:32px;border-radius:4px;background:#666b76;overflow:hidden"><i class="abs" style="left:19px;top:0;width:18px;height:32px;background:#9ea3b0"></i><svg class="abs" style="left:19px;top:0" width="18" height="32" viewBox="0 0 18 32"><ellipse cx="9" cy="2.500" rx="2" ry="2.500" fill="#2a2422"/><rect x="7" y="6.500" width="4.500" height="4.500" fill="#1c1c22"/><path d="M5.500 8l1.500-1.500v4l-1.500 1zM11.500 6.500l2 4.500-1 .5-1-2z" fill="#a87a5e"/><rect x="7.200" y="11" width="4" height="2" fill="#a87a5e"/><rect x="6.800" y="13" width="5" height="3.500" fill="#1c1c22"/><path d="M7 16.500h2l-.5 13h-1.500zM10 16.500h2l-.3 13h-1.500z" fill="#a07256"/><rect x="2" y="19" width="14" height="2.300" rx=".6" fill="#f0ece0"/><rect x="3.500" y="29.500" width="3" height="2" fill="#2a2422"/><rect x="10.500" y="29.500" width="3" height="2" fill="#2a2422"/></svg><i class="abs" style="left:38px;top:14px;width:16px;height:16px;border-radius:3px;background:#fff"></i><svg class="abs" style="left:41px;top:16.500px" width="10" height="12" viewBox="0 0 10 12"><path d="M6.800.600L2.200 3.200c-1 .6-1.200 1.900-.5 2.700.2.200.5.400.8.500l-.6.300c-1 .6-1.200 1.800-.6 2.700.6.900 1.800 1.100 2.700.6l4.400-2.600c1-.6 1.200-1.900.5-2.700-.2-.2-.5-.4-.8-.5l.6-.3c1-.6 1.200-1.800.6-2.700C8.700.300 7.700.100 6.800.600z" fill="#ff0033"/></svg></div>
<div class="abs" id="t_r0" style="left:83.8px;top:392.2px;font-size:13.400px;line-height:20px;white-space:nowrap">Black don’t Crack can y...</div>
<div class="abs" style="left:215.8px;top:392.2px;width:80px;text-align:right;font-size:13.400px;line-height:20px"><span id="t_v0">32,221</span></div>
<div class="abs" style="left:15.8px;top:426.2px;width:56px;height:32px;border-radius:4px;background:#5c4f44;overflow:hidden"><i class="abs" style="left:19px;top:0;width:18px;height:32px;background:#3a3632"></i><svg class="abs" style="left:19px;top:0" width="18" height="32" viewBox="0 0 18 32"><rect width="18" height="12" fill="#b9b0a0"/><path d="M0 0h5l-2 12H0z" fill="#4a4038"/><path d="M6 3c1-1.500 2.500-1.500 3 0l4 1.500-4 1 .5 3.500-3 3-1.500-.5 2-4z" fill="#1e1c1c"/><rect y="12" width="18" height="20" fill="#2a2624"/><circle cx="12" cy="11.500" r="2.300" fill="#6a4a38"/><path d="M4 16l6-2 6 3v10l-12 1z" fill="#1e2a4a"/><path d="M8.500 15l2 1-.5 9-2.500.5z" fill="#e8e4d8"/><path d="M9 15.500l1 .5-.3 3-1 .2z" fill="#d8c84a"/><rect x="3" y="24" width="4" height="2.500" fill="#a82a2a"/><path d="M2 27l10 4h6v1H0z" fill="#0e0e0e"/><path d="M8 26l8 4" stroke="#ddd" stroke-width="1"/></svg><i class="abs" style="left:38px;top:14px;width:16px;height:16px;border-radius:3px;background:#fff"></i><svg class="abs" style="left:41px;top:16.500px" width="10" height="12" viewBox="0 0 10 12"><path d="M6.800.600L2.200 3.200c-1 .6-1.200 1.900-.5 2.700.2.200.5.400.8.500l-.6.300c-1 .6-1.200 1.800-.6 2.700.6.900 1.800 1.100 2.700.6l4.400-2.600c1-.6 1.200-1.900.5-2.700-.2-.2-.5-.4-.8-.5l.6-.3c1-.6 1.200-1.800.6-2.700C8.700.300 7.700.100 6.800.600z" fill="#ff0033"/></svg></div>
<div class="abs" id="t_r1" style="left:83.8px;top:432.2px;font-size:13.400px;line-height:20px;white-space:nowrap">How France made Haiti P...</div>
<div class="abs" style="left:215.8px;top:432.2px;width:80px;text-align:right;font-size:13.400px;line-height:20px"><span id="t_v1">1,755</span></div>
<div class="abs" style="left:15.8px;top:466.2px;width:56px;height:32px;border-radius:4px;background:#5e5245;overflow:hidden"><i class="abs" style="left:19px;top:0;width:18px;height:32px;background:#6e6a58"></i><svg class="abs" style="left:19px;top:0" width="18" height="32" viewBox="0 0 18 32"><rect width="18" height="32" fill="#7a7a62"/><rect x="0" y="2" width="7" height="12" fill="#d8d8c8"/><rect x="0" y="8" width="6" height="6" fill="#9ab860"/><path d="M6 4c1-4 9-4 11 0v14l-3 4H8l-2-6z" fill="#1e1a22"/><ellipse cx="11.500" cy="9" rx="3.800" ry="5" fill="#a87658"/><rect x="7.500" y="6" width="8" height="2.600" rx="1" fill="#121214"/><path d="M5 17c3-2 10-2 13 0v15H5z" fill="#a07052"/><path d="M8 22c3 2 7 2 10 0v10H7z" fill="#5a5a5e"/><circle cx="6.500" cy="20.500" r="3.600" fill="#8ed048"/><rect x="0" y="28" width="5" height="4" fill="#9ad050"/></svg><i class="abs" style="left:38px;top:14px;width:16px;height:16px;border-radius:3px;background:#fff"></i><svg class="abs" style="left:41px;top:16.500px" width="10" height="12" viewBox="0 0 10 12"><path d="M6.800.600L2.200 3.200c-1 .6-1.200 1.900-.5 2.700.2.200.5.400.8.500l-.6.300c-1 .6-1.200 1.800-.6 2.700.6.900 1.800 1.100 2.700.6l4.400-2.600c1-.6 1.200-1.900.5-2.700-.2-.2-.5-.4-.8-.5l.6-.3c1-.6 1.200-1.800.6-2.700C8.700.300 7.700.100 6.800.600z" fill="#ff0033"/></svg></div>
<div class="abs" id="t_r2" style="left:83.8px;top:472.2px;font-size:13.400px;line-height:20px;white-space:nowrap">You must buy these vegeta...</div>
<div class="abs" style="left:215.8px;top:472.2px;width:80px;text-align:right;font-size:13.400px;line-height:20px"><span id="t_v2">823</span></div>
<div class="pill" style="left:15.8px;top:518.2px;width:91px"><span id="t_sm2">See more</span></div>
</div>
<div class="card" style="left:950.2px;top:783.2px;width:314px;height:200px">
<div class="abs" id="t_lc" style="left:15.500px;top:12.500px;font-size:18.500px;line-height:26px;-webkit-text-stroke:.600px #0f0f0f;white-space:nowrap">Latest content</div>
<div class="abs" style="left:15.500px;top:48px;width:280px;height:100px;border-radius:8px;background:linear-gradient(90deg,#2a221c,#3a3024 40%,#5a5a30 65%,#2a241c)"></div>
</div>
<!--MAIN_END-->
</div>
<div id="sbar"><i></i></div>
<div class="abs" style="left:0;top:872px;width:1920px;height:26px;background:linear-gradient(180deg,rgba(0,0,0,0),rgba(0,0,0,.075));z-index:6;pointer-events:none"></div>
</div>

<!-- DOCK -->
<div id="dock">
<!--DOCK_START-->
<svg class="abs" style="left:8.00px;top:8.25px" width="43.5" height="43.5" viewBox="0 0 44 44"><defs><linearGradient id="fa" x1="0" y1="0" x2="0" y2="1"><stop offset="0" stop-color="#1fc4ff"/><stop offset="1" stop-color="#1a68ee"/></linearGradient><clipPath id="fc"><rect x="2" y="3" width="40" height="38" rx="3"/></clipPath></defs><g clip-path="url(#fc)"><rect x="2" y="3" width="40" height="38" fill="#e9eef5"/><path d="M2 3h22c-3 8-4.500 15-4.500 21h5c0 6 .5 11 1.500 17H2z" fill="url(#fa)"/><path d="M24 3c-3 8-4.500 15-4.500 21h5c0 6 .5 11 1.500 17" fill="none" stroke="#14325a" stroke-width="1.100"/><path d="M10 28c6 6 18 6 24 0" fill="none" stroke="#14325a" stroke-width="1.500" stroke-linecap="round"/><path d="M12.500 12v4.500M31 12v4.500" stroke="#14325a" stroke-width="1.700" stroke-linecap="round"/></g></svg>
<svg class="abs" style="left:59.50px;top:8.25px" width="43.5" height="43.5" viewBox="0 0 44 44"><defs><radialGradient id="la" cx=".5" cy=".25" r=".85"><stop offset="0" stop-color="#c3c8ca"/><stop offset="1" stop-color="#6a7073"/></radialGradient></defs><circle cx="22" cy="22" r="21.500" fill="#dfe1e2"/><circle cx="22" cy="22" r="20" fill="url(#la)"/><path d="M35 8.500c-8.500 0-15 4.500-19 13l6.500 6.500C31 24 35.500 17.500 35 8.500z" fill="#33383b"/><circle cx="27.500" cy="16.500" r="2.600" fill="#8d9396"/><path d="M17.500 19.500l-8 1.500 5.500-5.500 5-.5zM24.500 26.500l-1.500 8 5.500-5.500.5-5z" fill="#33383b"/><path d="M14.500 26c-2.500.5-4.500 3.500-4.500 7.500 4 0 7-2 7.500-4.500z" fill="#33383b"/></svg>
<svg class="abs" style="left:111.00px;top:8.25px" width="43.5" height="43.5" viewBox="0 0 44 44"><g transform="rotate(-6 22 22)"><rect x="6" y="4" width="33" height="37" rx="1.500" fill="#fdfdf8" stroke="#d9d2b0" stroke-width=".6"/><rect x="6" y="4" width="33" height="8" rx="1.500" fill="#fbd233"/><path d="M6 11h33" stroke="#e2b31a" stroke-width=".8"/><path d="M8 16h29M8 19h29M8 22h29M8 25h29M8 28h29M8 31h29M8 34h29M8 37h29" stroke="#d8d8d2" stroke-width=".7"/><path d="M6 40l33 0" stroke="#c9a227" stroke-width="1.400"/></g></svg>
<svg class="abs" style="left:162.50px;top:8.25px" width="43.5" height="43.5" viewBox="0 0 44 44"><defs><radialGradient id="sa" cx=".5" cy=".5" r=".5"><stop offset="0" stop-color="#2e3470"/><stop offset=".65" stop-color="#161a3c"/><stop offset="1" stop-color="#07070f"/></radialGradient><radialGradient id="sw" cx=".5" cy=".5" r=".5"><stop offset="0" stop-color="#fff"/><stop offset="1" stop-color="#fff" stop-opacity="0"/></radialGradient></defs><circle cx="22" cy="22" r="21.500" fill="#f0f0f4"/><circle cx="22" cy="22" r="20" fill="url(#sa)"/><path d="M5 27c8-1 11-10 16-13 4-2 3 7 8 9 4 1.500 7-2 11-2-5 3-8 8-13 6.500-4-1.200-4-6-7-5.500-4 .5-8 6-15 5z" fill="#35dff0" opacity=".9"/><path d="M8 12c6 2 9 9 13 10s8-8 14-9c-3 5-5 13-10 14-7 1-11-9-17-15z" fill="#c04ce8" opacity=".8"/><path d="M19 5c1 7 2 13 4.500 17 2 4.500 3 9 2 15-4-6-6-10.500-7-15-.800-5-1-10 .5-17z" fill="#f24a90" opacity=".9"/><path d="M26 20c4-1 8 0 12 2-4 1-8 3-12 2z" fill="#3ee08a" opacity=".85"/><ellipse cx="21.500" cy="21.500" rx="6" ry="5" fill="url(#sw)"/></svg>
<svg class="abs" style="left:214.00px;top:8.25px" width="43.5" height="43.5" viewBox="0 0 44 44"><g transform="rotate(-9 20 24)"><rect x="3" y="5" width="32" height="37" fill="#f6f8fb"/><rect x="3" y="5" width="32" height="37" fill="none" stroke="#f6f8fb" stroke-width="2.200" stroke-dasharray="1.800 1.500"/><rect x="6" y="8" width="26" height="31" fill="#6fb0e8"/><path d="M6 28c8-4 18-4 26 0v11H6z" fill="#b5d6f2"/><path d="M6 33c8-3 18-3 26 0v6H6z" fill="#d5e7f6"/><path d="M9 14c5 0 8 2 10 5 3-2 7-2 12 1-4 0-6 2-7 5l3 4c-3 0-5-1-7-3-3 1-5 0-7-2 2 0 3-1 3-3-2-3-4-5-7-7z" fill="#8a6536"/><path d="M17 20c2 0 4 1 5 3" stroke="#f0e6d0" stroke-width="1.200" fill="none"/></g><circle cx="33" cy="34" r="8" fill="none" stroke="#7a7080" stroke-width=".7" opacity=".75"/><circle cx="33" cy="34" r="6" fill="none" stroke="#7a7080" stroke-width=".5" opacity=".7"/><path d="M33 31.500c1.500 0 2.500 1 2.500 2.700S34.500 37 33 37s-2.500-1.100-2.500-2.800 1-2.700 2.500-2.700z" fill="#6a7a98" opacity=".75"/></svg>
<svg class="abs" style="left:265.50px;top:8.25px" width="43.5" height="43.5" viewBox="0 0 44 44"><defs><linearGradient id="sf" x1="0" y1="0" x2="0" y2="1"><stop offset="0" stop-color="#29b6ff"/><stop offset="1" stop-color="#1a62e0"/></linearGradient></defs><circle cx="22" cy="22" r="21" fill="#e8eaee"/><circle cx="22" cy="22" r="19" fill="url(#sf)"/><circle cx="22" cy="22" r="16.500" fill="none" stroke="#fff" stroke-width="2.500" stroke-dasharray=".6 1.560" opacity=".9"/><path d="M33.500 10.500L19.800 19.800l4.400 4.400z" fill="#ff3b30"/><path d="M10.500 33.500l13.700-9.300-4.400-4.400z" fill="#f4f4f4"/></svg>
<svg class="abs" style="left:317.00px;top:8.25px" width="43.5" height="43.5" viewBox="0 0 44 44"><rect x="2.500" y="2.500" width="39" height="39" rx="9" fill="#f8f5f1"/><path d="M22 4.500a17.500 17.500 0 0115.160 8.750H22a8.750 8.750 0 00-7.580 4.380L6.840 13.250A17.500 17.500 0 0122 4.500z" fill="#ea4335"/><path d="M37.160 13.250A17.500 17.500 0 0122 39.500l7.580-13.130A8.750 8.750 0 0029.580 17.630L22 13.250z" fill="#fbbc04"/><path d="M22 39.500A17.500 17.500 0 016.840 13.250l7.580 13.120A8.750 8.750 0 0029.580 26.370z" fill="#34a853"/><circle cx="22" cy="22" r="8.300" fill="#fff"/><circle cx="22" cy="22" r="6.700" fill="#4285f4"/></svg>
<svg class="abs" style="left:368.50px;top:8.25px" width="43.5" height="43.5" viewBox="0 0 44 44"><defs><radialGradient id="ff1" cx=".7" cy=".15" r="1"><stop offset="0" stop-color="#fff04a"/><stop offset=".3" stop-color="#ffbd2e"/><stop offset=".6" stop-color="#ff7a1f"/><stop offset=".85" stop-color="#ff3a4a"/><stop offset="1" stop-color="#e0208a"/></radialGradient><radialGradient id="ff2" cx=".5" cy=".4" r=".6"><stop offset="0" stop-color="#9a5cff"/><stop offset="1" stop-color="#5a2ad0"/></radialGradient></defs><rect x="2.500" y="2.500" width="39" height="39" rx="9" fill="#20123a"/><path d="M26 3c2 3.500 6 5 8.500 9.500 2.800 5 3.500 10.500 2 15.500-2 6.500-8 10.500-14.500 10.500C13.500 38.500 6.500 32 6.500 23.500c0-3.500 1-6.500 2.500-9 .3 1.500 1 2.800 2 3.700 0-3.200 1.500-6 4-8-.3 2 .5 3.500 2 4.500 2-.5 4-.3 6 .5-1-1.800-1-3.800 0-5.700.8-1.700 2.200-3.500 3-6.500z" fill="url(#ff1)"/><circle cx="22.500" cy="23" r="8.200" fill="url(#ff2)"/><path d="M13.500 19c2.500-2.500 6.500-3.500 10-2l-1.500 3c2.500-.2 4 1 4.500 3-2 1.500-5.500 2-8.500 1-2.800-1-4.500-2.800-4.500-5z" fill="#ff8a1a"/><path d="M14 29c3 3.500 9 4.500 13.500 2 3.500-2 5-5.500 4.500-9 2 4 1 9-3 12-4.500 3-11 2.500-15-1.500-1-1-1.200-2.300 0-3.500z" fill="#ff4a3a" opacity=".75"/></svg>
<svg class="abs" style="left:420.00px;top:8.25px" width="43.5" height="43.5" viewBox="0 0 44 44"><g transform="rotate(-5 22 22)"><rect x="37" y="7" width="3" height="6" fill="#e8e8e8"/><rect x="37" y="14" width="3" height="7" fill="#6ac0f0"/><rect x="37" y="22" width="3" height="7" fill="#6ad07a"/><rect x="37" y="30" width="3" height="7" fill="#f2a82a"/><rect x="5" y="2.500" width="33" height="40" rx="2" fill="#b98a50"/><rect x="5" y="2.500" width="4.500" height="40" rx="1.500" fill="#a27440"/><path d="M5 40.500h33v2H7z" fill="#8a6030"/><circle cx="24" cy="21" r="10.500" fill="none" stroke="#a67a42" stroke-width="1.200"/><circle cx="21" cy="18" r="3.300" fill="#a27440"/><circle cx="28" cy="18.500" r="3" fill="#a27440"/><path d="M15 28c.5-4.500 11.500-4.500 12 0zM24.500 28c.5-3.800 8-3.800 8.500 0z" fill="#a27440"/></g></svg>
<svg class="abs" style="left:471.50px;top:8.25px" width="43.5" height="43.5" viewBox="0 0 44 44"><g transform="rotate(-5 22 22)"><rect x="3.500" y="7" width="37" height="35" rx="2" fill="#5a6a7a"/><rect x="4.500" y="5.500" width="36" height="35" rx="2" fill="#c9d0d6"/><rect x="4" y="3" width="36" height="35.500" rx="2" fill="#fcfcfc"/><path d="M4 5a2 2 0 012-2h32a2 2 0 012 2v8.500H4z" fill="#e9463f"/><text x="22" y="11.800" font-size="8" fill="#fff" text-anchor="middle" font-family="Liberation Sans, sans-serif" textLength="15.500" lengthAdjust="spacingAndGlyphs">MAR</text><text x="22" y="35" font-size="23.500" fill="#2a2a2a" text-anchor="middle" font-family="Liberation Sans, sans-serif" textLength="25" lengthAdjust="spacingAndGlyphs">25</text></g></svg>
<svg class="abs" style="left:523.00px;top:8.25px" width="43.5" height="43.5" viewBox="0 0 44 44"><g transform="rotate(-7 22 22)"><rect x="8" y="4" width="30" height="38" rx="2.500" fill="#7a7a7e"/><rect x="7" y="3" width="30" height="37" rx="2.500" fill="#fafafa"/><circle cx="12.500" cy="11" r="2.300" fill="#ff9f0a"/><circle cx="12.500" cy="18.500" r="2.300" fill="#2c9df5"/><circle cx="12.500" cy="26" r="2.300" fill="#3ed14a"/><circle cx="12.500" cy="33.500" r="2.300" fill="#c76be8"/><path d="M17 11h17M17 18.500h17M17 26h17M17 33.500h17" stroke="#d6d6d6" stroke-width=".8"/></g></svg>
<svg class="abs" style="left:574.50px;top:8.25px" width="43.5" height="43.5" viewBox="0 0 44 44"><circle cx="22" cy="22" r="21" fill="#f6f6f6" stroke="#dcdcdc" stroke-width=".6"/><ellipse cx="22" cy="12.500" rx="5.200" ry="8.500" fill="#f9b61a" opacity=".85" transform="rotate(0 22 22)"/><ellipse cx="22" cy="12.500" rx="5.200" ry="8.500" fill="#f2e23a" opacity=".85" transform="rotate(45 22 22)"/><ellipse cx="22" cy="12.500" rx="5.200" ry="8.500" fill="#8ccf3e" opacity=".85" transform="rotate(90 22 22)"/><ellipse cx="22" cy="12.500" rx="5.200" ry="8.500" fill="#3fc4a0" opacity=".85" transform="rotate(135 22 22)"/><ellipse cx="22" cy="12.500" rx="5.200" ry="8.500" fill="#3b8ef0" opacity=".85" transform="rotate(180 22 22)"/><ellipse cx="22" cy="12.500" rx="5.200" ry="8.500" fill="#8a62d8" opacity=".85" transform="rotate(225 22 22)"/><ellipse cx="22" cy="12.500" rx="5.200" ry="8.500" fill="#e0508a" opacity=".85" transform="rotate(270 22 22)"/><ellipse cx="22" cy="12.500" rx="5.200" ry="8.500" fill="#f0522e" opacity=".85" transform="rotate(315 22 22)"/><circle cx="22" cy="22" r="1.300" fill="#fff"/></svg>
<svg class="abs" style="left:626.00px;top:8.25px" width="43.5" height="43.5" viewBox="0 0 44 44"><path d="M3 31h38v9H3z" fill="#f4f4f4" stroke="#d5d5d5" stroke-width=".5"/><path d="M3 31l3-6h32l3 6z" fill="#e6e6e6"/><rect x="8" y="22" width="7" height="14" rx="1" fill="#e8454f"/><rect x="17" y="14" width="7" height="22" rx="1" fill="#f59a23"/><rect x="26" y="2" width="7" height="34" rx="1" fill="#2fbf4a"/><rect x="35" y="9" width="6" height="27" rx="1" fill="#2a9af0" transform="translate(-1.500 0)"/><path d="M5 33v1M5 35.500v1M5 38v1" stroke="#999" stroke-width="1"/></svg>
<svg class="abs" style="left:677.50px;top:8.25px" width="43.5" height="43.5" viewBox="0 0 44 44"><path d="M20 1.500c10.500 0 19 6.700 19 15S30.500 31.500 20 31.500c-2.200 0-4.300-.3-6.200-.9C11.300 33.200 8 35 4.500 35c2-1.900 3.300-4.100 3.600-6.400C3.700 25.700 1 21.400 1 16.500c0-8.300 8.500-15 19-15z" fill="#3c93f2"/><path d="M30 21c7 0 12.500 4.300 12.500 9.600 0 3-1.700 5.700-4.500 7.500.2 1.600 1.100 3.100 2.300 4.300-2.400 0-4.700-1-6.300-2.700-1.300.3-2.600.5-4 .5-7 0-12.500-4.300-12.500-9.600S23 21 30 21z" fill="#e9f1fb" stroke="#c5d9f2" stroke-width=".5"/><circle cx="24" cy="30.600" r="1.900" fill="#2a62c8"/><circle cx="30" cy="30.600" r="1.900" fill="#2a62c8"/><circle cx="36" cy="30.600" r="1.900" fill="#2a62c8"/></svg>
<svg class="abs" style="left:729.00px;top:8.25px" width="43.5" height="43.5" viewBox="0 0 44 44"><rect x="1" y="5" width="36" height="33" rx="7" fill="#2fd04a"/><rect x="7" y="14" width="19" height="15" rx="3" fill="#f2f2f2"/><path d="M27.500 19.500l6-4.500v13l-6-4.500z" fill="#f2f2f2"/><circle cx="32" cy="32" r="10.500" fill="#f4f4f4" stroke="#d8d8d8" stroke-width=".5"/><path d="M27.500 27.500l2.500-.8 1.500 3.200-1.600 1.300c.8 1.700 2 2.900 3.800 3.700l1.300-1.600 3.200 1.500-.8 2.500c-5.400.4-10.300-4.400-9.900-9.800z" fill="#2fc84a"/></svg>
<svg class="abs" style="left:780.50px;top:8.25px" width="43.5" height="43.5" viewBox="0 0 44 44"><defs><linearGradient id="fr" x1="0" y1="0" x2="1" y2="0"><stop offset="0" stop-color="#f2d21a"/><stop offset=".25" stop-color="#6ed43a"/><stop offset=".5" stop-color="#f26a8a"/><stop offset=".75" stop-color="#b04ae0"/><stop offset="1" stop-color="#3a6af0"/></linearGradient><linearGradient id="fr2" x1="0" y1="0" x2="0" y2="1"><stop offset="0" stop-color="#f03a2a" stop-opacity=".9"/><stop offset=".5" stop-color="#fff" stop-opacity=".25"/><stop offset="1" stop-color="#2ad0c0" stop-opacity=".6"/></linearGradient></defs><g transform="rotate(-5 22 24)"><rect x="3" y="15" width="38" height="26" rx="2.500" fill="#2b2b2d"/><rect x="5.500" y="19" width="33" height="20" rx="1.500" fill="url(#fr)"/><rect x="5.500" y="19" width="33" height="20" rx="1.500" fill="url(#fr2)"/></g><g transform="rotate(-14 4 18)"><rect x="3" y="9.500" width="38" height="7.500" fill="#1c1c1e"/><path d="M6 9.500h5l-3.500 7.500h-5zM16 9.500h5l-3.500 7.500h-5zM26 9.500h5l-3.500 7.500h-5zM36 9.500h5l-3.500 7.500h-5z" fill="#f2f2f2"/></g><path d="M2.500 16l37.500-4.500v4L3 20z" fill="#1c1c1e"/></svg>
<svg class="abs" style="left:832.00px;top:8.25px" width="43.5" height="43.5" viewBox="0 0 44 44"><g transform="rotate(-5 22 22)"><rect x="5" y="5" width="30" height="37" fill="#fbfbfb" stroke="#d8d8d8" stroke-width=".5"/><rect x="5" y="5" width="30" height="5.500" fill="#f08a24"/><text x="8" y="9.600" font-size="4.200" fill="#fff" font-family="Liberation Sans, sans-serif">PAGES</text><rect x="8" y="13" width="12" height="10" fill="#f08a24"/><path d="M10 15l4 6 4-6z" fill="#f7c53a"/><path d="M22 14h11M22 16.500h11M22 19h11M22 21.500h11M8 26h25M8 28.500h25M8 31h25M8 33.500h25M8 36h18" stroke="#b9b9b9" stroke-width=".8"/></g><path d="M36.500 2.500l3 1-9.500 33-2.500 3.500-.5-4.500z" fill="#e8962a"/><path d="M36.500 2.500l1.500.5-9.700 33-1.300-.5z" fill="#f8c064"/><path d="M27 36l-.4 4.500 2.900-3.700z" fill="#333"/></svg>
<svg class="abs" style="left:883.50px;top:8.25px" width="43.5" height="43.5" viewBox="0 0 44 44"><defs><linearGradient id="as" x1="0" y1="0" x2="0" y2="1"><stop offset="0" stop-color="#1fc0fb"/><stop offset="1" stop-color="#1a6ef0"/></linearGradient></defs><circle cx="22" cy="22" r="21" fill="#e6f0fb"/><circle cx="22" cy="22" r="19.500" fill="url(#as)"/><path d="M22 10.500l-9.500 17M20 10.500l11.500 20M9.500 26.500h16M29.500 26.500h5" stroke="#fff" stroke-width="2.800" stroke-linecap="round" fill="none"/><path d="M11.500 29.500l-1.200 2" stroke="#fff" stroke-width="2.800" stroke-linecap="round"/></svg>
<svg class="abs" style="left:936.25px;top:8.25px" width="43.5" height="43.5" viewBox="0 0 44 44"><path d="M4 3h36l-3 17H7z" fill="#2a8fe8"/><path d="M1 20h42l-1.500 3h-39z" fill="#3aa6f5"/><rect x="10" y="5" width="24" height="12" fill="#fafafa"/><circle cx="17" cy="11" r="4" fill="#f2b23a"/><path d="M17 11V7a4 4 0 013.800 5.200z" fill="#e8458a"/><path d="M17 11l3.800 1.200A4 4 0 0114.500 14z" fill="#3ac46a"/><path d="M23.500 8h8M23.500 10.500h8M23.500 13h6" stroke="#bbb" stroke-width="1"/><rect x="20.500" y="23" width="3" height="15" fill="#c9d3dc"/><ellipse cx="22" cy="40" rx="9" ry="2.800" fill="#d5dde4"/><ellipse cx="22" cy="39.300" rx="6.500" ry="1.600" fill="#eef2f5"/></svg>
<svg class="abs" style="left:987.75px;top:8.25px" width="43.5" height="43.5" viewBox="0 0 44 44"><defs><linearGradient id="bk" x1="0" y1="0" x2="0" y2="1"><stop offset="0" stop-color="#fb9b2a"/><stop offset="1" stop-color="#e8541a"/></linearGradient></defs><circle cx="22" cy="22" r="21" fill="#f6f0ea"/><circle cx="22" cy="22" r="19.500" fill="url(#bk)"/><path d="M22 14.500c-3.500-2.800-8-3.300-12-2.300v17.300c4-1 8.500-.5 12 2.300 3.500-2.800 8-3.300 12-2.300V12.200c-4-1-8.500-.5-12 2.300z" fill="#fbfbfb"/><path d="M22 14.500v17.300" stroke="#e8702a" stroke-width="1.300"/></svg>
<svg class="abs" style="left:1038.75px;top:8.25px" width="43.5" height="43.5" viewBox="0 0 44 44"><defs><linearGradient id="mu" x1="0" y1="0" x2="1" y2="1"><stop offset="0" stop-color="#f85a9a"/><stop offset=".5" stop-color="#b55af0"/><stop offset="1" stop-color="#3ac0f8"/></linearGradient><linearGradient id="mn" x1="0" y1="0" x2="0" y2="1"><stop offset="0" stop-color="#f8466a"/><stop offset=".55" stop-color="#b55af0"/><stop offset="1" stop-color="#3a9af8"/></linearGradient></defs><circle cx="22" cy="22" r="21" fill="url(#mu)"/><circle cx="22" cy="22" r="19" fill="#fbfbfd"/><path d="M17 12.500l14-3v17.300a3.800 3.300 0 11-2.500-3.100V14.800l-9 2v12.500a3.800 3.300 0 11-2.500-3.100z" fill="url(#mn)"/></svg>
<svg class="abs" style="left:1091.25px;top:8.25px" width="43.5" height="43.5" viewBox="0 0 44 44"><defs><linearGradient id="sp" x1="0" y1="0" x2="0" y2="1"><stop offset="0" stop-color="#a9adb0"/><stop offset="1" stop-color="#707477"/></linearGradient></defs><rect x="1.500" y="1.500" width="41" height="41" rx="2.500" fill="url(#sp)" stroke="#5d6063" stroke-width=".5"/><rect x="20.300" y="4.500" width="3.400" height="5" fill="#2e2f31" transform="rotate(0 22 22)"/><rect x="20.300" y="4.500" width="3.400" height="5" fill="#2e2f31" transform="rotate(18 22 22)"/><rect x="20.300" y="4.500" width="3.400" height="5" fill="#2e2f31" transform="rotate(36 22 22)"/><rect x="20.300" y="4.500" width="3.400" height="5" fill="#2e2f31" transform="rotate(54 22 22)"/><rect x="20.300" y="4.500" width="3.400" height="5" fill="#2e2f31" transform="rotate(72 22 22)"/><rect x="20.300" y="4.500" width="3.400" height="5" fill="#2e2f31" transform="rotate(90 22 22)"/><rect x="20.300" y="4.500" width="3.400" height="5" fill="#2e2f31" transform="rotate(108 22 22)"/><rect x="20.300" y="4.500" width="3.400" height="5" fill="#2e2f31" transform="rotate(126 22 22)"/><rect x="20.300" y="4.500" width="3.400" height="5" fill="#2e2f31" transform="rotate(144 22 22)"/><rect x="20.300" y="4.500" width="3.400" height="5" fill="#2e2f31" transform="rotate(162 22 22)"/><rect x="20.300" y="4.500" width="3.400" height="5" fill="#2e2f31" transform="rotate(180 22 22)"/><rect x="20.300" y="4.500" width="3.400" height="5" fill="#2e2f31" transform="rotate(198 22 22)"/><rect x="20.300" y="4.500" width="3.400" height="5" fill="#2e2f31" transform="rotate(216 22 22)"/><rect x="20.300" y="4.500" width="3.400" height="5" fill="#2e2f31" transform="rotate(234 22 22)"/><rect x="20.300" y="4.500" width="3.400" height="5" fill="#2e2f31" transform="rotate(252 22 22)"/><rect x="20.300" y="4.500" width="3.400" height="5" fill="#2e2f31" transform="rotate(270 22 22)"/><rect x="20.300" y="4.500" width="3.400" height="5" fill="#2e2f31" transform="rotate(288 22 22)"/><rect x="20.300" y="4.500" width="3.400" height="5" fill="#2e2f31" transform="rotate(306 22 22)"/><rect x="20.300" y="4.500" width="3.400" height="5" fill="#2e2f31" transform="rotate(324 22 22)"/><rect x="20.300" y="4.500" width="3.400" height="5" fill="#2e2f31" transform="rotate(342 22 22)"/><circle cx="22" cy="22" r="14.500" fill="#2e2f31"/><circle cx="22" cy="22" r="12" fill="#86898c"/><circle cx="22" cy="22" r="10.500" fill="#4a4c4f"/><path d="M22 22V11.500M22 22l9.100 5.250M22 22l-9.100 5.250" stroke="#b9bcbe" stroke-width="3.200"/><circle cx="22" cy="22" r="2.800" fill="#d5d7d9"/><circle cx="22" cy="22" r="10.500" fill="none" stroke="#b9bcbe" stroke-width="1.500"/></svg>
<svg class="abs" style="left:1142.75px;top:8.25px" width="43.5" height="43.5" viewBox="0 0 44 44"><rect x="2.500" y="2.500" width="39" height="39" rx="8" fill="#2a5cf0"/><path d="M13 8l24 6-6 23-24-6z" fill="#fdfdfd"/><path d="M19.500 18.500l6.200 1.600-1.600 6.200-6.200-1.600z" fill="#2a5cf0"/></svg>
<svg class="abs" style="left:1194.75px;top:8.25px" width="43.5" height="43.5" viewBox="0 0 44 44"><g transform="rotate(4 22 16)"><rect x="9" y="2" width="30" height="26" fill="#f4efe2" stroke="#c9c1a8" stroke-width=".5"/><rect x="11" y="4" width="26" height="22" fill="#a68a5a"/></g><g transform="rotate(-7 18 24)"><rect x="3" y="8" width="32" height="30" fill="#fbfbfb" stroke="#d0d0d0" stroke-width=".5"/><rect x="5" y="10" width="28" height="26" fill="#6aa6e0"/><path d="M5 24c7-4 12 2 17-1 4-2 7-1 11 0v13H5z" fill="#2a4f78"/><path d="M5 28c6-2 10 1 15 0 5-1.500 8 0 13 1v7H5z" fill="#dfe8f0"/><path d="M5 10h28v8c-9-2-18-2-28 2z" fill="#9cc8f0"/></g><circle cx="33" cy="30" r="7.500" fill="#c9ccd0" stroke="#6d7074" stroke-width="1.800"/><circle cx="33" cy="30" r="4.800" fill="#9aa4ae"/><rect x="29" y="36" width="8" height="7" rx="1.500" fill="#55585c"/></svg>
<svg class="abs" style="left:1246.25px;top:8.25px" width="43.5" height="43.5" viewBox="0 0 44 44"><rect x="2" y="4" width="40" height="36" rx="2.500" fill="#3a3a3a"/><rect x="2.800" y="4.800" width="38.400" height="34.400" rx="2" fill="#161616"/><text x="6" y="17.500" font-size="11" font-weight="700" fill="#f2f2f2" font-family="Liberation Mono, monospace">&gt;_</text></svg>
<svg class="abs" style="left:1297.25px;top:8.25px" width="43.5" height="43.5" viewBox="0 0 44 44"><rect x="2.500" y="2.500" width="39" height="39" rx="8" fill="#1a8df0"/><circle cx="22" cy="22" r="16" fill="#fdfdfd"/><path d="M7.500 22l8.500-5.500V20h12v-3.500L36.500 22 28 27.500V24H16v3.500z" fill="#1a7df0"/></svg>
<div class="abs" style="left:226.0px;top:6.5px;width:35px;height:17px;border-radius:8.500px;background:#f23b3b;color:#fff;font-size:9.5px;line-height:17px;text-align:center;-webkit-text-stroke:.2px #fff">42,094</div>
<div class="abs" style="left:707.5px;top:6.5px;width:17px;height:17px;border-radius:8.500px;background:#f23b3b;color:#fff;font-size:9.5px;line-height:17px;text-align:center;-webkit-text-stroke:.2px #fff">97</div>
<div class="abs" style="left:759.0px;top:6.5px;width:17px;height:17px;border-radius:8.500px;background:#f23b3b;color:#fff;font-size:9.5px;line-height:17px;text-align:center;-webkit-text-stroke:.2px #fff">48</div>
<i class="abs" style="left:28.2px;top:57.700000000000045px;width:3.600px;height:3.600px;border-radius:50%;background:#160a08"></i>
<i class="abs" style="left:130.9px;top:57.700000000000045px;width:3.600px;height:3.600px;border-radius:50%;background:#160a08"></i>
<i class="abs" style="left:233.7px;top:57.700000000000045px;width:3.600px;height:3.600px;border-radius:50%;background:#160a08"></i>
<i class="abs" style="left:337.2px;top:57.700000000000045px;width:3.600px;height:3.600px;border-radius:50%;background:#160a08"></i>
<i class="abs" style="left:698.2px;top:57.700000000000045px;width:3.600px;height:3.600px;border-radius:50%;background:#160a08"></i>
<i class="abs" style="left:1058.7px;top:57.700000000000045px;width:3.600px;height:3.600px;border-radius:50%;background:#160a08"></i>
<i class="abs" style="left:1214.2px;top:57.700000000000045px;width:3.600px;height:3.600px;border-radius:50%;background:#160a08"></i>
<i class="abs" style="left:1266.2px;top:57.700000000000045px;width:3.600px;height:3.600px;border-radius:50%;background:#160a08"></i>
<i class="abs" style="left:1317.2px;top:57.700000000000045px;width:3.600px;height:3.600px;border-radius:50%;background:#160a08"></i>
<i class="abs" style="left:1357.5px;top:8px;width:1px;height:48px;background:rgba(90,40,10,.55)"></i>
<div class="abs" style="left:1371.0px;top:16.5px;width:46.0px;height:26.5px;background:#fbfbfb;overflow:hidden;box-shadow:0 0 1px rgba(0,0,0,.4)"><i class="abs" style="left:0;top:0;width:100%;height:2px;background:#d0d4d8"></i><i class="abs" style="left:9px;top:8px;width:34px;height:5px;background:#2a62c8"></i><i class="abs" style="left:9px;top:4px;width:34px;height:2px;background:#f2dcc0"></i><i class="abs" style="left:9px;top:15px;width:10px;height:6px;background:#dfe8f5"></i><i class="abs" style="left:25px;top:15px;width:4px;height:8px;background:#a8c8f0"></i><i class="abs" style="left:9px;top:22px;width:20px;height:2px;background:#2a62c8"></i><i class="abs" style="left:0;top:24.500px;width:100%;height:2px;background:#3a3a3a"></i></div><svg class="abs" style="left:1402.0px;top:29.0px" width="15" height="15" viewBox="0 0 44 44"><rect x="3" y="6" width="32" height="28" fill="#fbfbfb"/><rect x="5" y="8" width="28" height="24" fill="#6aa6e0"/><path d="M5 22c9-3 18 1 28 0v10H5z" fill="#2a4f78"/><circle cx="32" cy="30" r="8" fill="#c9ccd0" stroke="#6d7074" stroke-width="2.500"/></svg>
<div class="abs" style="left:1425.0px;top:7.5px;width:42.0px;height:44.5px;background:#fbfbfb;overflow:hidden;box-shadow:0 0 1px rgba(0,0,0,.4)"><i class="abs" style="left:0;top:0;width:100%;height:100%;background:#141414"></i><i class="abs" style="left:2.500px;top:3px;width:37px;height:39px;background:repeating-linear-gradient(180deg,#d8d8d8 0,#d8d8d8 1.200px,#8a8a8a 1.200px,#8a8a8a 2.200px,#e2e2e2 2.200px,#e2e2e2 3.500px)"></i></div><svg class="abs" style="left:1452.0px;top:38.0px" width="15" height="15" viewBox="0 0 44 44"><rect x="3" y="6" width="32" height="28" fill="#fbfbfb"/><rect x="5" y="8" width="28" height="24" fill="#6aa6e0"/><path d="M5 22c9-3 18 1 28 0v10H5z" fill="#2a4f78"/><circle cx="32" cy="30" r="8" fill="#c9ccd0" stroke="#6d7074" stroke-width="2.500"/></svg>
<div class="abs" style="left:1474.5px;top:7.5px;width:45.2px;height:44.5px;background:#fbfbfb;overflow:hidden;box-shadow:0 0 1px rgba(0,0,0,.4)"><i class="abs" style="left:0;top:0;width:6px;height:100%;background:#f0f0f0"></i><i class="abs" style="left:1px;top:8px;width:4px;height:1px;background:#999"></i><i class="abs" style="left:1px;top:11px;width:4px;height:1px;background:#aaa"></i><i class="abs" style="left:1px;top:14px;width:4px;height:1px;background:#aaa"></i><i class="abs" style="left:9px;top:10px;width:3.500px;height:2px;background:#333"></i><i class="abs" style="left:14px;top:10px;width:3.500px;height:2px;background:#222"></i><i class="abs" style="left:9px;top:17px;width:3.500px;height:2px;background:#444"></i><i class="abs" style="left:14px;top:17px;width:3.500px;height:2px;background:#666"></i><i class="abs" style="left:9px;top:29px;width:2.500px;height:3px;background:#3aa0f0"></i><i class="abs" style="left:9px;top:3px;width:2px;height:1px;background:#e66"></i></div><svg class="abs" style="left:1504.2px;top:37.0px" width="14" height="14" viewBox="0 0 14 14"><rect x="0" y="0" width="14" height="14" rx="1" fill="#e6edf5"/><path d="M0 1a1 1 0 011-1h6.500c-1 2.500-1.500 5-1.500 7.500h1.700c0 2 .2 4 .6 6.500H1a1 1 0 01-1-1z" fill="#2a9af2"/><path d="M3 9c2.500 2 5.500 2 8 0" fill="none" stroke="#173a66" stroke-width=".6"/><path d="M4 3.500v1.500M10 3.500v1.500" stroke="#173a66" stroke-width=".7"/></svg>
<div class="abs" style="left:1526.5px;top:7.5px;width:44.9px;height:44.5px;background:#fbfbfb;overflow:hidden;box-shadow:0 0 1px rgba(0,0,0,.4)"><i class="abs" style="left:0;top:0;width:6px;height:100%;background:#f0f0f0"></i><i class="abs" style="left:1px;top:8px;width:4px;height:1px;background:#999"></i><i class="abs" style="left:1px;top:11px;width:4px;height:1px;background:#aaa"></i><i class="abs" style="left:1px;top:14px;width:4px;height:1px;background:#aaa"></i><i class="abs" style="left:9px;top:10px;width:3.500px;height:2px;background:#333"></i><i class="abs" style="left:14px;top:10px;width:3.500px;height:2px;background:#222"></i><i class="abs" style="left:9px;top:17px;width:3.500px;height:2px;background:#444"></i><i class="abs" style="left:14px;top:17px;width:3.500px;height:2px;background:#666"></i><i class="abs" style="left:9px;top:29px;width:2.500px;height:3px;background:#3aa0f0"></i><i class="abs" style="left:9px;top:3px;width:2px;height:1px;background:#e66"></i></div><svg class="abs" style="left:1555.9px;top:37.0px" width="14" height="14" viewBox="0 0 14 14"><rect x="0" y="0" width="14" height="14" rx="1" fill="#e6edf5"/><path d="M0 1a1 1 0 011-1h6.500c-1 2.500-1.500 5-1.500 7.500h1.700c0 2 .2 4 .6 6.500H1a1 1 0 01-1-1z" fill="#2a9af2"/><path d="M3 9c2.500 2 5.500 2 8 0" fill="none" stroke="#173a66" stroke-width=".6"/><path d="M4 3.500v1.500M10 3.500v1.500" stroke="#173a66" stroke-width=".7"/></svg>
<div class="abs" style="left:1577.4px;top:7.5px;width:45.2px;height:44.5px;background:#fbfbfb;overflow:hidden;box-shadow:0 0 1px rgba(0,0,0,.4)"><i class="abs" style="left:0;top:0;width:6px;height:100%;background:#f0f0f0"></i><i class="abs" style="left:1px;top:8px;width:4px;height:1px;background:#999"></i><i class="abs" style="left:1px;top:11px;width:4px;height:1px;background:#aaa"></i><i class="abs" style="left:1px;top:14px;width:4px;height:1px;background:#aaa"></i><i class="abs" style="left:9px;top:4px;width:2px;height:2.500px;background:#555"></i><i class="abs" style="left:14px;top:4px;width:2px;height:2.500px;background:#333"></i><i class="abs" style="left:19px;top:4px;width:2px;height:3px;background:#444"></i></div><svg class="abs" style="left:1607.1px;top:37.0px" width="14" height="14" viewBox="0 0 14 14"><rect x="0" y="0" width="14" height="14" rx="1" fill="#e6edf5"/><path d="M0 1a1 1 0 011-1h6.500c-1 2.500-1.500 5-1.500 7.500h1.700c0 2 .2 4 .6 6.500H1a1 1 0 01-1-1z" fill="#2a9af2"/><path d="M3 9c2.500 2 5.500 2 8 0" fill="none" stroke="#173a66" stroke-width=".6"/><path d="M4 3.500v1.500M10 3.500v1.500" stroke="#173a66" stroke-width=".7"/></svg>
<div class="abs" style="left:1629.7px;top:7.5px;width:44.9px;height:44.5px;background:#fbfbfb;overflow:hidden;box-shadow:0 0 1px rgba(0,0,0,.4)"><i class="abs" style="left:0;top:0;width:6px;height:100%;background:#f0f0f0"></i><i class="abs" style="left:1px;top:8px;width:4px;height:1px;background:#999"></i><i class="abs" style="left:1px;top:11px;width:4px;height:1px;background:#aaa"></i><i class="abs" style="left:1px;top:14px;width:4px;height:1px;background:#aaa"></i><i class="abs" style="left:9.0px;top:4.0px;width:3px;height:1.600px;background:#4a4a4a"></i><i class="abs" style="left:14.5px;top:4.0px;width:3px;height:1.600px;background:#4a4a4a"></i><i class="abs" style="left:20.0px;top:4.0px;width:3px;height:1.600px;background:#4a4a4a"></i><i class="abs" style="left:25.5px;top:4.0px;width:3px;height:1.600px;background:#4a4a4a"></i><i class="abs" style="left:31.0px;top:4.0px;width:3px;height:1.600px;background:#4a4a4a"></i><i class="abs" style="left:36.5px;top:4.0px;width:3px;height:1.600px;background:#4a4a4a"></i><i class="abs" style="left:9.0px;top:8.6px;width:3px;height:1.600px;background:#4a4a4a"></i><i class="abs" style="left:14.5px;top:8.6px;width:3px;height:1.600px;background:#4a4a4a"></i><i class="abs" style="left:20.0px;top:8.6px;width:3px;height:1.600px;background:#4a4a4a"></i><i class="abs" style="left:25.5px;top:8.6px;width:3px;height:1.600px;background:#4a4a4a"></i><i class="abs" style="left:31.0px;top:8.6px;width:3px;height:1.600px;background:#4a4a4a"></i><i class="abs" style="left:36.5px;top:8.6px;width:3px;height:1.600px;background:#4a4a4a"></i><i class="abs" style="left:9.0px;top:13.2px;width:3px;height:1.600px;background:#4a4a4a"></i><i class="abs" style="left:14.5px;top:13.2px;width:3px;height:1.600px;background:#4a4a4a"></i><i class="abs" style="left:20.0px;top:13.2px;width:3px;height:1.600px;background:#4a4a4a"></i><i class="abs" style="left:25.5px;top:13.2px;width:3px;height:1.600px;background:#4a4a4a"></i><i class="abs" style="left:31.0px;top:13.2px;width:3px;height:1.600px;background:#4a4a4a"></i><i class="abs" style="left:36.5px;top:13.2px;width:3px;height:1.600px;background:#4a4a4a"></i><i class="abs" style="left:9.0px;top:17.799999999999997px;width:3px;height:1.600px;background:#4a4a4a"></i><i class="abs" style="left:14.5px;top:17.799999999999997px;width:3px;height:1.600px;background:#4a4a4a"></i><i class="abs" style="left:20.0px;top:17.799999999999997px;width:3px;height:1.600px;background:#4a4a4a"></i><i class="abs" style="left:25.5px;top:17.799999999999997px;width:3px;height:1.600px;background:#4a4a4a"></i><i class="abs" style="left:31.0px;top:17.799999999999997px;width:3px;height:1.600px;background:#4a4a4a"></i><i class="abs" style="left:36.5px;top:17.799999999999997px;width:3px;height:1.600px;background:#4a4a4a"></i><i class="abs" style="left:9.0px;top:22.4px;width:3px;height:1.600px;background:#4a4a4a"></i><i class="abs" style="left:14.5px;top:22.4px;width:3px;height:1.600px;background:#4a4a4a"></i><i class="abs" style="left:20.0px;top:22.4px;width:3px;height:1.600px;background:#4a4a4a"></i><i class="abs" style="left:25.5px;top:22.4px;width:3px;height:1.600px;background:#4a4a4a"></i><i class="abs" style="left:31.0px;top:22.4px;width:3px;height:1.600px;background:#4a4a4a"></i><i class="abs" style="left:36.5px;top:22.4px;width:3px;height:1.600px;background:#4a4a4a"></i><i class="abs" style="left:9.0px;top:27.0px;width:3px;height:1.600px;background:#4a4a4a"></i><i class="abs" style="left:14.5px;top:27.0px;width:3px;height:1.600px;background:#4a4a4a"></i><i class="abs" style="left:20.0px;top:27.0px;width:3px;height:1.600px;background:#4a4a4a"></i><i class="abs" style="left:25.5px;top:27.0px;width:3px;height:1.600px;background:#4a4a4a"></i><i class="abs" style="left:31.0px;top:27.0px;width:3px;height:1.600px;background:#4a4a4a"></i><i class="abs" style="left:36.5px;top:27.0px;width:3px;height:1.600px;background:#4a4a4a"></i><i class="abs" style="left:9.0px;top:31.599999999999998px;width:3px;height:1.600px;background:#4a4a4a"></i><i class="abs" style="left:14.5px;top:31.599999999999998px;width:3px;height:1.600px;background:#4a4a4a"></i><i class="abs" style="left:20.0px;top:31.599999999999998px;width:3px;height:1.600px;background:#4a4a4a"></i><i class="abs" style="left:25.5px;top:31.599999999999998px;width:3px;height:1.600px;background:#4a4a4a"></i><i class="abs" style="left:31.0px;top:31.599999999999998px;width:3px;height:1.600px;background:#4a4a4a"></i><i class="abs" style="left:36.5px;top:31.599999999999998px;width:3px;height:1.600px;background:#4a4a4a"></i><i class="abs" style="left:9.0px;top:36.199999999999996px;width:3px;height:1.600px;background:#4a4a4a"></i><i class="abs" style="left:14.5px;top:36.199999999999996px;width:3px;height:1.600px;background:#4a4a4a"></i><i class="abs" style="left:20.0px;top:36.199999999999996px;width:3px;height:1.600px;background:#4a4a4a"></i><i class="abs" style="left:25.5px;top:36.199999999999996px;width:3px;height:1.600px;background:#4a4a4a"></i><i class="abs" style="left:31.0px;top:36.199999999999996px;width:3px;height:1.600px;background:#4a4a4a"></i><i class="abs" style="left:36.5px;top:36.199999999999996px;width:3px;height:1.600px;background:#4a4a4a"></i><i class="abs" style="left:9.0px;top:40.8px;width:3px;height:1.600px;background:#4a4a4a"></i><i class="abs" style="left:14.5px;top:40.8px;width:3px;height:1.600px;background:#4a4a4a"></i><i class="abs" style="left:20.0px;top:40.8px;width:3px;height:1.600px;background:#4a4a4a"></i><i class="abs" style="left:25.5px;top:40.8px;width:3px;height:1.600px;background:#4a4a4a"></i><i class="abs" style="left:31.0px;top:40.8px;width:3px;height:1.600px;background:#4a4a4a"></i><i class="abs" style="left:36.5px;top:40.8px;width:3px;height:1.600px;background:#4a4a4a"></i><i class="abs" style="left:9.0px;top:10.6px;width:3px;height:1.600px;background:#9ab8e0"></i><i class="abs" style="left:14.5px;top:10.6px;width:3px;height:1.600px;background:#9ab8e0"></i><i class="abs" style="left:20.0px;top:10.6px;width:3px;height:1.600px;background:#9ab8e0"></i><i class="abs" style="left:25.5px;top:10.6px;width:3px;height:1.600px;background:#9ab8e0"></i><i class="abs" style="left:31.0px;top:10.6px;width:3px;height:1.600px;background:#9ab8e0"></i><i class="abs" style="left:36.5px;top:10.6px;width:3px;height:1.600px;background:#9ab8e0"></i><i class="abs" style="left:9.0px;top:19.799999999999997px;width:3px;height:1.600px;background:#9ab8e0"></i><i class="abs" style="left:14.5px;top:19.799999999999997px;width:3px;height:1.600px;background:#9ab8e0"></i><i class="abs" style="left:20.0px;top:19.799999999999997px;width:3px;height:1.600px;background:#9ab8e0"></i><i class="abs" style="left:25.5px;top:19.799999999999997px;width:3px;height:1.600px;background:#9ab8e0"></i><i class="abs" style="left:31.0px;top:19.799999999999997px;width:3px;height:1.600px;background:#9ab8e0"></i><i class="abs" style="left:36.5px;top:19.799999999999997px;width:3px;height:1.600px;background:#9ab8e0"></i><i class="abs" style="left:9.0px;top:29.0px;width:3px;height:1.600px;background:#9ab8e0"></i><i class="abs" style="left:14.5px;top:29.0px;width:3px;height:1.600px;background:#9ab8e0"></i><i class="abs" style="left:20.0px;top:29.0px;width:3px;height:1.600px;background:#9ab8e0"></i><i class="abs" style="left:25.5px;top:29.0px;width:3px;height:1.600px;background:#9ab8e0"></i><i class="abs" style="left:31.0px;top:29.0px;width:3px;height:1.600px;background:#9ab8e0"></i><i class="abs" style="left:36.5px;top:29.0px;width:3px;height:1.600px;background:#9ab8e0"></i></div><svg class="abs" style="left:1659.1px;top:37.0px" width="14" height="14" viewBox="0 0 14 14"><rect x="0" y="0" width="14" height="14" rx="1" fill="#e6edf5"/><path d="M0 1a1 1 0 011-1h6.500c-1 2.500-1.500 5-1.500 7.500h1.700c0 2 .2 4 .6 6.500H1a1 1 0 01-1-1z" fill="#2a9af2"/><path d="M3 9c2.500 2 5.500 2 8 0" fill="none" stroke="#173a66" stroke-width=".6"/><path d="M4 3.500v1.500M10 3.500v1.500" stroke="#173a66" stroke-width=".7"/></svg>
<div class="abs" style="left:1681.4px;top:7.5px;width:45.0px;height:44.5px;background:#fbfbfb;overflow:hidden;box-shadow:0 0 1px rgba(0,0,0,.4)"><i class="abs" style="left:0;top:0;width:6px;height:100%;background:#f0f0f0"></i><i class="abs" style="left:1px;top:8px;width:4px;height:1px;background:#999"></i><i class="abs" style="left:1px;top:11px;width:4px;height:1px;background:#aaa"></i><i class="abs" style="left:1px;top:14px;width:4px;height:1px;background:#aaa"></i><i class="abs" style="left:9.0px;top:4.0px;width:3px;height:1.600px;background:#333"></i><i class="abs" style="left:14.5px;top:4.0px;width:3px;height:1.600px;background:#333"></i><i class="abs" style="left:9.0px;top:22.4px;width:3px;height:1.600px;background:#8a78c8"></i><i class="abs" style="left:14.5px;top:22.4px;width:3px;height:1.600px;background:#8a78c8"></i><i class="abs" style="left:20.0px;top:22.4px;width:3px;height:1.600px;background:#8a78c8"></i><i class="abs" style="left:25.5px;top:22.4px;width:3px;height:1.600px;background:#8a78c8"></i><i class="abs" style="left:31.0px;top:22.4px;width:3px;height:1.600px;background:#8a78c8"></i><i class="abs" style="left:36.5px;top:22.4px;width:3px;height:1.600px;background:#8a78c8"></i><i class="abs" style="left:9.0px;top:27.0px;width:3px;height:1.600px;background:#8a78c8"></i><i class="abs" style="left:14.5px;top:27.0px;width:3px;height:1.600px;background:#8a78c8"></i><i class="abs" style="left:20.0px;top:27.0px;width:3px;height:1.600px;background:#8a78c8"></i><i class="abs" style="left:25.5px;top:27.0px;width:3px;height:1.600px;background:#8a78c8"></i><i class="abs" style="left:31.0px;top:27.0px;width:3px;height:1.600px;background:#8a78c8"></i><i class="abs" style="left:36.5px;top:27.0px;width:3px;height:1.600px;background:#8a78c8"></i><i class="abs" style="left:9.0px;top:31.599999999999998px;width:3px;height:1.600px;background:#8a78c8"></i><i class="abs" style="left:14.5px;top:31.599999999999998px;width:3px;height:1.600px;background:#8a78c8"></i><i class="abs" style="left:20.0px;top:31.599999999999998px;width:3px;height:1.600px;background:#8a78c8"></i><i class="abs" style="left:25.5px;top:31.599999999999998px;width:3px;height:1.600px;background:#8a78c8"></i><i class="abs" style="left:31.0px;top:31.599999999999998px;width:3px;height:1.600px;background:#8a78c8"></i><i class="abs" style="left:36.5px;top:31.599999999999998px;width:3px;height:1.600px;background:#8a78c8"></i><i class="abs" style="left:9.0px;top:36.199999999999996px;width:3px;height:1.600px;background:#8a78c8"></i><i class="abs" style="left:14.5px;top:36.199999999999996px;width:3px;height:1.600px;background:#8a78c8"></i><i class="abs" style="left:20.0px;top:36.199999999999996px;width:3px;height:1.600px;background:#8a78c8"></i><i class="abs" style="left:25.5px;top:36.199999999999996px;width:3px;height:1.600px;background:#8a78c8"></i><i class="abs" style="left:31.0px;top:36.199999999999996px;width:3px;height:1.600px;background:#8a78c8"></i><i class="abs" style="left:36.5px;top:36.199999999999996px;width:3px;height:1.600px;background:#8a78c8"></i><i class="abs" style="left:9.0px;top:40.8px;width:3px;height:1.600px;background:#8a78c8"></i><i class="abs" style="left:14.5px;top:40.8px;width:3px;height:1.600px;background:#8a78c8"></i><i class="abs" style="left:20.0px;top:40.8px;width:3px;height:1.600px;background:#8a78c8"></i><i class="abs" style="left:25.5px;top:40.8px;width:3px;height:1.600px;background:#8a78c8"></i><i class="abs" style="left:31.0px;top:40.8px;width:3px;height:1.600px;background:#8a78c8"></i><i class="abs" style="left:36.5px;top:40.8px;width:3px;height:1.600px;background:#8a78c8"></i><i class="abs" style="left:9.0px;top:41.8px;width:3px;height:1.600px;background:#333"></i><i class="abs" style="left:14.5px;top:41.8px;width:3px;height:1.600px;background:#333"></i><i class="abs" style="left:20.0px;top:41.8px;width:3px;height:1.600px;background:#333"></i></div><svg class="abs" style="left:1710.9px;top:37.0px" width="14" height="14" viewBox="0 0 14 14"><rect x="0" y="0" width="14" height="14" rx="1" fill="#e6edf5"/><path d="M0 1a1 1 0 011-1h6.500c-1 2.500-1.500 5-1.500 7.500h1.700c0 2 .2 4 .6 6.500H1a1 1 0 01-1-1z" fill="#2a9af2"/><path d="M3 9c2.500 2 5.500 2 8 0" fill="none" stroke="#173a66" stroke-width=".6"/><path d="M4 3.500v1.500M10 3.500v1.500" stroke="#173a66" stroke-width=".7"/></svg>
<div class="abs" style="left:1734.8px;top:7.5px;width:40.2px;height:44.5px;background:#fbfbfb;overflow:hidden;box-shadow:0 0 1px rgba(0,0,0,.4)"><i class="abs" style="left:0;top:0;width:6px;height:100%;background:#f0f0f0"></i><i class="abs" style="left:1px;top:8px;width:4px;height:1px;background:#999"></i><i class="abs" style="left:1px;top:11px;width:4px;height:1px;background:#aaa"></i><i class="abs" style="left:1px;top:14px;width:4px;height:1px;background:#aaa"></i><i class="abs" style="left:12px;top:4px;width:8px;height:1.500px;background:#444"></i><i class="abs" style="left:10px;top:9px;width:26px;height:30px;background:repeating-linear-gradient(180deg,#9a9a9a 0,#9a9a9a .8px,#fbfbfb .8px,#fbfbfb 2.400px)"></i><i class="abs" style="left:27px;top:5px;width:9px;height:6px;background:repeating-linear-gradient(180deg,#888 0,#888 .8px,#fbfbfb .8px,#fbfbfb 2px)"></i></div><svg class="abs" style="left:1760.0px;top:38.0px" width="15" height="15" viewBox="0 0 44 44"><rect x="3" y="6" width="32" height="28" fill="#fbfbfb"/><rect x="5" y="8" width="28" height="24" fill="#6aa6e0"/><path d="M5 22c9-3 18 1 28 0v10H5z" fill="#2a4f78"/><circle cx="32" cy="30" r="8" fill="#c9ccd0" stroke="#6d7074" stroke-width="2.500"/></svg>
<svg class="abs" style="left:1788px;top:6px" width="38" height="46" viewBox="0 0 38 46"><defs><linearGradient id="tr" x1="0" y1="0" x2="1" y2="0"><stop offset="0" stop-color="#d5d5d5"/><stop offset=".35" stop-color="#f4f4f4"/><stop offset=".7" stop-color="#e2e2e2"/><stop offset="1" stop-color="#bdbdbd"/></linearGradient></defs><path d="M2 9h34l-3.500 33c-.2 2-1.500 3-3.500 3H9c-2 0-3.300-1-3.500-3z" fill="url(#tr)" opacity=".93"/><ellipse cx="19" cy="9" rx="17" ry="4.500" fill="#cfcfcf"/><ellipse cx="19" cy="9" rx="15" ry="3.300" fill="#8a8a8a"/><path d="M6 8l4-6 5 3 5-4 5 4 5-2 3 5c-7 3-20 3-27 0z" fill="#e8e8e8"/><path d="M10 4l3 3M20 2l-2 4M27 4l-2 4" stroke="#3a7ad0" stroke-width="1.200"/><path d="M14 5l3 2M24 6l3-1" stroke="#d04a3a" stroke-width="1.200"/><path d="M11 6l2 2" stroke="#4ab04a" stroke-width="1.200"/></svg>
<!--DOCK_END-->
</div>
</div>
</body>
</html>
